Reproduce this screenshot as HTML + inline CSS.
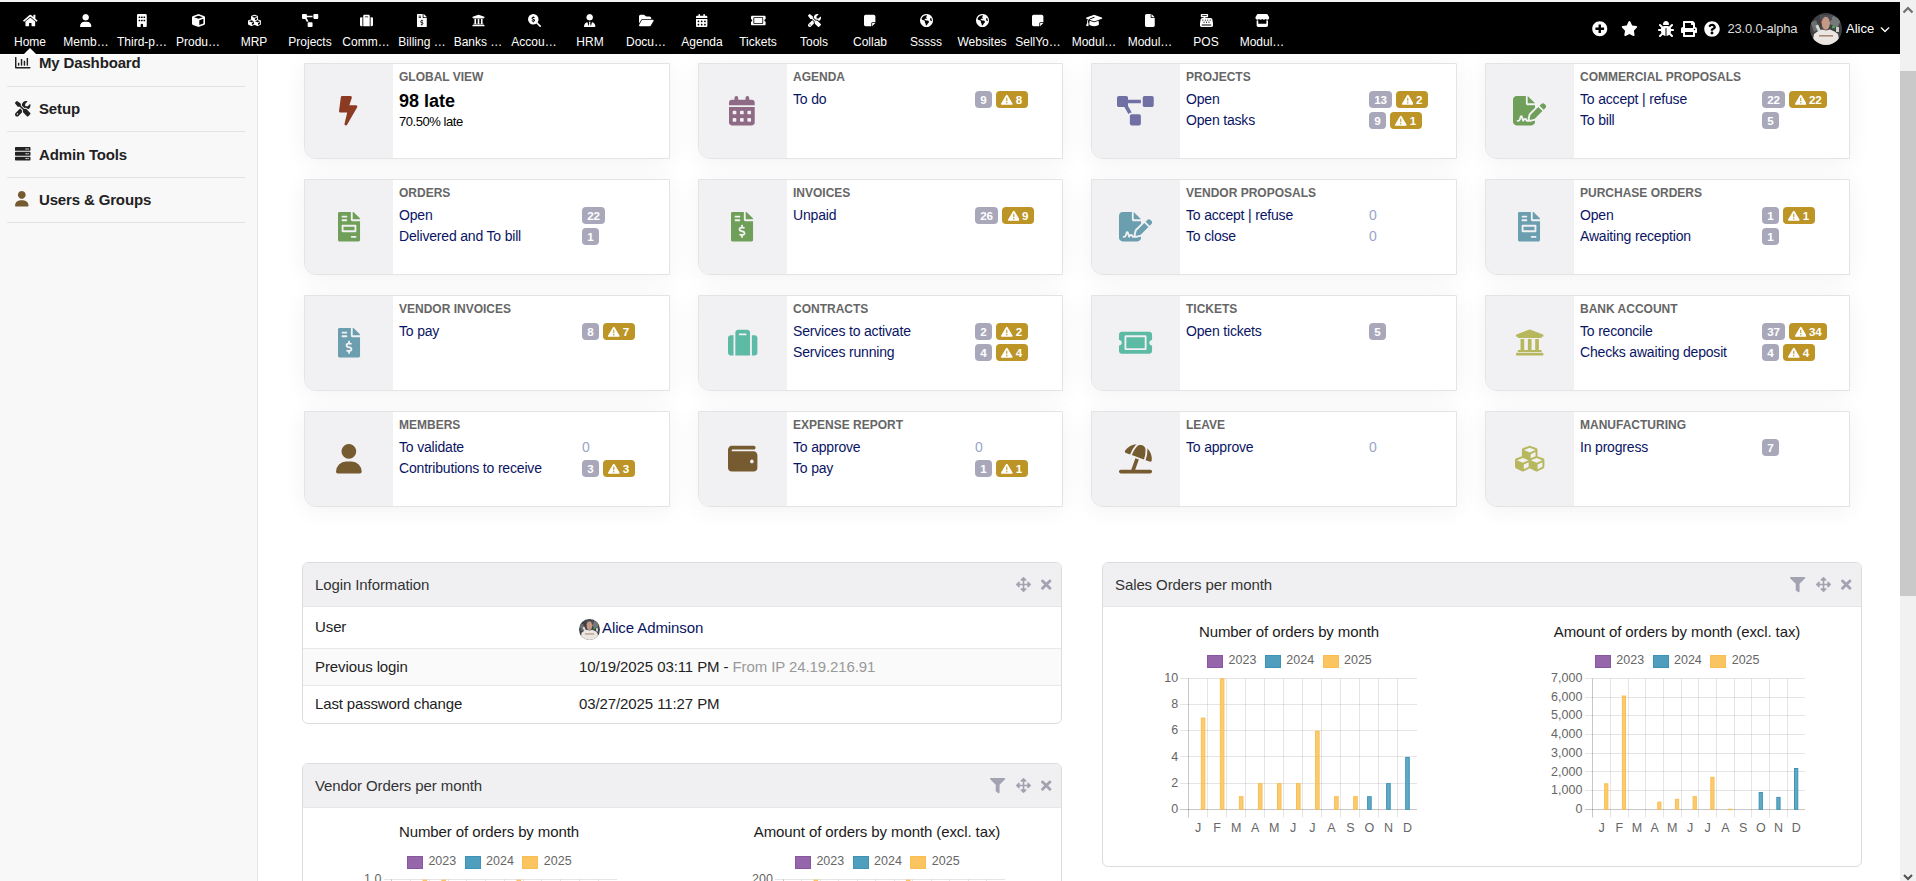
<!DOCTYPE html><html><head><meta charset="utf-8"><style>
*{box-sizing:border-box}
html,body{margin:0;padding:0}
body{width:1916px;height:881px;overflow:hidden;background:#fff;position:relative;font-family:"Liberation Sans",sans-serif}
.a{position:absolute;display:block;overflow:visible}
.t{position:absolute;white-space:nowrap}
.card{position:absolute;width:365.3px;height:96px;background:#fff;border:1px solid #e4e4e4;border-bottom-left-radius:12px;box-shadow:0 3px 24px rgba(0,0,0,0.055);overflow:hidden}
.card .ib{position:absolute;left:0;top:0;width:88px;height:94px;background:#f1f1f4}
.bdg{position:relative;height:17px;border-radius:4px;color:#fff;font-weight:700;font-size:11.6px;line-height:17px;padding:0 5px 0 5.2px;white-space:nowrap;letter-spacing:-0.1px}
.bg{background:#a9a8bb}
.bw{background:#bc9526;padding:0 5.6px 0 5.7px}
.lnk{color:#0a1464}
.panel{position:absolute;border:1px solid #dcdcdf;border-radius:6px;background:#fff;overflow:hidden}
.ph{position:absolute;left:0;top:0;right:0;height:44px;background:#f0f0f3;border-bottom:1px solid #e6e6e9}
</style></head><body>
<div class="a" style="left:0;top:0;width:1900px;height:2px;background:#f4f4f6"></div>
<div class="a" style="left:0;top:2px;width:1900px;height:52px;background:#000"></div>
<svg class="a" style="left:22.69px;top:13.50px;width:14.62px;height:13.00px;" viewBox="0 0 576 512"><path fill="#fff" fill-rule="evenodd" d="M280.37 148.26L96 300.11V464a16 16 0 0 0 16 16l112-.29a16 16 0 0 0 15.92-16V368a16 16 0 0 1 16-16h64a16 16 0 0 1 16 16v95.64a16 16 0 0 0 16 16.05L464 480a16 16 0 0 0 16-16V300L295.67 148.26a12.19 12.19 0 0 0-15.3 0zM571.6 251.47L488 182.56V44.05a12 12 0 0 0-12-12h-56a12 12 0 0 0-12 12v72.61L318.47 43a48 48 0 0 0-61 0L4.34 251.47a12 12 0 0 0-1.6 16.9l25.5 31A12 12 0 0 0 45.15 301l235.22-193.74a12.19 12.19 0 0 1 15.3 0L530.9 301a12 12 0 0 0 16.9-1.6l25.5-31a12 12 0 0 0-1.7-16.93z"/></svg>
<div class="t" style="left:30px;top:36.34px;font-size:12px;line-height:12px;color:#fff;font-weight:400;transform:translateX(-50%);">Home</div>
<svg class="a" style="left:80.31px;top:13.50px;width:11.38px;height:13.00px;" viewBox="0 0 448 512"><path fill="#fff" fill-rule="evenodd" d="M224 256Q259 256 288 239Q317 222 335 192Q352 162 352 128Q352 94 335 64Q317 34 288 17Q259 0 224 0Q189 0 160 17Q131 34 113 64Q96 94 96 128Q96 162 113 192Q131 222 160 239Q189 256 224 256ZM178 304Q103 306 52 356Q2 407 0 482Q0 495 9 503Q17 512 30 512H418Q431 512 439 503Q448 495 448 482Q446 407 396 356Q345 306 270 304H178Z"/></svg>
<div class="t" style="left:86px;top:36.34px;font-size:12px;line-height:12px;color:#fff;font-weight:400;transform:translateX(-50%);">Memb…</div>
<svg class="a" style="left:137.12px;top:13.50px;width:9.75px;height:13.00px;" viewBox="0 0 384 512"><path fill="#fff" fill-rule="evenodd" d="M48 0Q28 1 14 14Q1 28 0 48V464Q1 484 14 498Q28 511 48 512H144V432Q145 412 158 398Q172 385 192 384Q212 385 226 398Q239 412 240 432V512H336Q356 511 370 498Q383 484 384 464V48Q383 28 370 14Q356 1 336 0H48ZM64 240Q65 225 80 224H112Q127 225 128 240V272Q127 287 112 288H80Q65 287 64 272V240ZM176 224H208H176H208Q223 225 224 240V272Q223 287 208 288H176Q161 287 160 272V240Q161 225 176 224ZM256 240Q257 225 272 224H304Q319 225 320 240V272Q319 287 304 288H272Q257 287 256 272V240ZM80 96H112H80H112Q127 97 128 112V144Q127 159 112 160H80Q65 159 64 144V112Q65 97 80 96ZM160 112Q161 97 176 96H208Q223 97 224 112V144Q223 159 208 160H176Q161 159 160 144V112ZM272 96H304H272H304Q319 97 320 112V144Q319 159 304 160H272Q257 159 256 144V112Q257 97 272 96Z"/></svg>
<div class="t" style="left:142px;top:36.34px;font-size:12px;line-height:12px;color:#fff;font-weight:400;transform:translateX(-50%);">Third-p…</div>
<svg class="a" style="left:191.50px;top:13.50px;width:13.00px;height:13.00px;" viewBox="0 0 512 512"><path fill="#fff" fill-rule="evenodd" d="M235 6Q256 -2 278 6L470 74Q489 82 500 98Q512 114 512 135V377Q512 398 500 414Q489 430 470 438L278 506Q256 514 234 506L42 438Q23 431 12 414Q0 398 0 377V135Q0 114 12 98Q23 82 43 74L235 6ZM256 66 82 128 256 66 82 128 256 190 430 128 256 66ZM288 435 448 378 288 435 448 378V190L288 247V435Z"/></svg>
<div class="t" style="left:198px;top:36.34px;font-size:12px;line-height:12px;color:#fff;font-weight:400;transform:translateX(-50%);">Produ…</div>
<svg class="a" style="left:247.50px;top:13.50px;width:13.00px;height:13.00px;" viewBox="0 0 512 512"><path fill="#fff" fill-rule="evenodd" d="M488.6 250.2L392 214V105.5c0-15-9.3-28.4-23.4-33.7l-100-37.5c-8.1-3.1-17.1-3.1-25.3 0l-100 37.5c-14.1 5.3-23.4 18.7-23.4 33.7V214l-96.6 36.2C9.3 255.5 0 268.9 0 283.9V394c0 13.6 7.7 26.1 19.9 32.2l100 50c10.1 5.1 22.1 5.1 32.2 0l103.9-52 103.9 52c10.1 5.1 22.1 5.1 32.2 0l100-50c12.2-6.1 19.9-18.6 19.9-32.2V283.9c0-15-9.3-28.4-23.4-33.700zM358 214.8l-85 31.9v-68.2l85-37v73.3zM154 104.1l102-38.2 102 38.2v.6l-102 41.4-102-41.4v-.6zm84 291.1l-85 42.5v-79.1l85-38.8v75.4zm0-112l-102 41.4-102-41.4v-.6l102-38.2 102 38.2v.6zm240 112l-85 42.5v-79.1l85-38.8v75.4zm0-112l-102 41.4-102-41.4v-.6l102-38.2 102 38.2v.6z"/></svg>
<div class="t" style="left:254px;top:36.34px;font-size:12px;line-height:12px;color:#fff;font-weight:400;transform:translateX(-50%);">MRP</div>
<svg class="a" style="left:301.88px;top:13.50px;width:16.25px;height:13.00px;" viewBox="0 0 640 512"><path fill="#fff" fill-rule="evenodd" d="M384 320H256c-17.67 0-32 14.33-32 32v128c0 17.67 14.33 32 32 32h128c17.67 0 32-14.33 32-32V352c0-17.67-14.33-32-32-32zM192 32c0-17.67-14.33-32-32-32H32C14.33 0 0 14.33 0 32v128c0 17.67 14.33 32 32 32h95.72l73.16 128.04C211.98 300.98 232.4 288 256 288h.28L192 175.51V128h224V64H192V32zM608 0H480c-17.67 0-32 14.33-32 32v128c0 17.67 14.33 32 32 32h128c17.67 0 32-14.33 32-32V32c0-17.67-14.33-32-32-32z"/></svg>
<div class="t" style="left:310px;top:36.34px;font-size:12px;line-height:12px;color:#fff;font-weight:400;transform:translateX(-50%);">Projects</div>
<svg class="a" style="left:359.50px;top:13.50px;width:13.00px;height:13.00px;" viewBox="0 0 512 512"><path fill="#fff" fill-rule="evenodd" d="M128 480h256V80c0-26.5-21.5-48-48-48H176c-26.5 0-48 21.5-48 48v400zM192 96h128v32H192V96zm320 80v256c0 26.5-21.5 48-48 48h-48V128h48c26.5 0 48 21.5 48 48zM96 480H48c-26.5 0-48-21.5-48-48V176c0-26.5 21.5-48 48-48h48v352z"/></svg>
<div class="t" style="left:366px;top:36.34px;font-size:12px;line-height:12px;color:#fff;font-weight:400;transform:translateX(-50%);">Comm…</div>
<svg class="a" style="left:417.12px;top:13.50px;width:9.75px;height:13.00px;" viewBox="0 0 384 512"><path fill="#fff" fill-rule="evenodd" d="M377 105L279.1 7c-4.5-4.5-10.6-7-17-7H256v128h128v-6.1c0-6.3-2.5-12.4-7-16.9zm-153 31V0H24C10.7 0 0 10.7 0 24v464c0 13.3 10.7 24 24 24h336c13.3 0 24-10.7 24-24V160H248c-13.2 0-24-10.8-24-24zM64 72c0-4.42 3.58-8 8-8h80c4.42 0 8 3.58 8 8v16c0 4.42-3.58 8-8 8H72c-4.42 0-8-3.58-8-8V72zm0 80v-16c0-4.42 3.58-8 8-8h80c4.42 0 8 3.58 8 8v16c0 4.42-3.58 8-8 8H72c-4.42 0-8-3.58-8-8zm144 263.88V440c0 4.42-3.58 8-8 8h-16c-4.42 0-8-3.58-8-8v-24.29c-11.29-.58-22.27-4.52-31.37-11.35-3.9-2.93-4.1-8.77-.57-12.14l11.75-11.21c2.77-2.64 6.89-2.76 10.13-.73 3.87 2.42 8.26 3.72 12.82 3.72h28.11c6.5 0 11.8-5.92 11.8-13.190 0-5.95-3.61-11.19-8.77-12.73l-45-13.5c-18.59-5.58-31.58-23.42-31.58-43.39 0-24.52 19.05-44.44 42.67-45.07V232c0-4.42 3.58-8 8-8h16c4.42 0 8 3.58 8 8v24.29c11.29.58 22.27 4.51 31.37 11.35 3.9 2.93 4.1 8.77.57 12.14l-11.75 11.21c-2.77 2.64-6.89 2.76-10.130.73-3.87-2.43-8.26-3.72-12.82-3.72h-28.11c-6.5 0-11.8 5.92-11.8 13.19 0 5.95 3.61 11.19 8.77 12.73l45 13.5c18.59 5.58 31.58 23.42 31.58 43.39 0 24.530-19.05 44.44-42.67 45.07z"/></svg>
<div class="t" style="left:422px;top:36.34px;font-size:12px;line-height:12px;color:#fff;font-weight:400;transform:translateX(-50%);">Billing …</div>
<svg class="a" style="left:471.50px;top:13.50px;width:13.00px;height:13.00px;" viewBox="0 0 512 512"><path fill="#fff" fill-rule="evenodd" d="M496 128v16a8 8 0 0 1-8 8h-24v12c0 6.627-5.373 12-12 12H60c-6.627 0-12-5.373-12-12v-12H24a8 8 0 0 1-8-8v-16a16 16 0 0 1 9.876-14.774l224-88a16 16 0 0 1 12.248 0l224 88A16 16 0 0 1 496 128zm-24 304H40c-13.255 0-24 10.745-24 24v16a8 8 0 0 0 8 8h464a8 8 0 0 0 8-8v-16c0-13.255-10.745-24-24-24zM96 192v192H60c-6.627 0-12 5.373-12 12v20h416v-20c0-6.627-5.373-12-12-12h-36V192h-64v192h-64V192h-64v192h-64V192H96z"/></svg>
<div class="t" style="left:478px;top:36.34px;font-size:12px;line-height:12px;color:#fff;font-weight:400;transform:translateX(-50%);">Banks …</div>
<svg class="a" style="left:527.50px;top:13.50px;width:13.00px;height:13.00px;" viewBox="0 0 512 512"><path fill="#fff" fill-rule="evenodd" d="M416 208Q415 278 376 331L503 457Q512 467 512 480Q512 493 503 503Q493 512 480 512Q467 512 457 503L331 376Q278 415 208 416Q120 414 61 355Q2 296 0 208Q2 120 61 61Q120 2 208 0Q296 2 355 61Q414 120 416 208ZM228 104Q226 86 208 84Q190 86 188 104V118Q176 120 166 127Q142 139 140 170Q143 200 165 211Q183 221 200 225L202 226Q221 231 230 236Q237 241 236 244Q236 252 230 255Q222 260 209 260Q193 259 174 251Q170 250 166 249Q148 245 141 261Q137 279 154 287Q157 288 160 289Q172 294 188 297V312Q190 330 208 332Q226 330 228 312V298Q240 296 251 289Q274 276 276 244Q273 214 251 203Q233 192 214 188L213 187Q195 182 185 177Q179 173 180 170Q179 165 186 161Q195 156 208 156Q222 156 239 161Q257 164 263 147Q266 129 249 122Q239 120 228 118V104Z"/></svg>
<div class="t" style="left:534px;top:36.34px;font-size:12px;line-height:12px;color:#fff;font-weight:400;transform:translateX(-50%);">Accou…</div>
<svg class="a" style="left:584.31px;top:13.50px;width:11.38px;height:13.00px;" viewBox="0 0 448 512"><path fill="#fff" fill-rule="evenodd" d="M96 128Q96 163 113 192Q130 221 160 239Q190 256 224 256Q258 256 288 239Q318 221 335 192Q352 163 352 128Q352 93 335 64Q318 35 288 17Q258 0 224 0Q190 0 160 17Q130 35 113 64Q96 93 96 128ZM191 328 209 359 191 328 209 359 176 483 140 336Q135 323 122 325Q68 339 35 381Q1 424 0 481Q0 494 9 503Q18 512 31 512H163Q162 512 163 512Q163 512 163 512H168H286Q285 512 286 512Q286 512 286 512H417Q430 512 439 503Q448 494 448 481Q447 424 413 381Q380 339 326 325Q313 323 308 336L272 483L239 359L258 328Q262 320 258 312Q253 305 244 304H224H204Q195 305 190 312Q186 320 191 328Z"/></svg>
<div class="t" style="left:590px;top:36.34px;font-size:12px;line-height:12px;color:#fff;font-weight:400;transform:translateX(-50%);">HRM</div>
<svg class="a" style="left:638.69px;top:13.50px;width:14.62px;height:13.00px;" viewBox="0 0 576 512"><path fill="#fff" fill-rule="evenodd" d="M89 224 0 376 89 224 0 376V96Q1 69 19 51Q37 33 64 32H182Q208 32 227 51L253 77Q272 96 299 96H416Q443 97 461 115Q479 133 480 160V192H144Q108 193 89 224ZM116 240Q126 225 144 224H544Q562 225 572 240Q580 256 572 272L460 464Q450 479 432 480H32Q14 479 4 464Q-4 448 4 432L116 240Z"/></svg>
<div class="t" style="left:646px;top:36.34px;font-size:12px;line-height:12px;color:#fff;font-weight:400;transform:translateX(-50%);">Docu…</div>
<svg class="a" style="left:696.31px;top:13.50px;width:11.38px;height:13.00px;" viewBox="0 0 448 512"><path fill="#fff" fill-rule="evenodd" d="M128 0Q142 0 151 9Q160 18 160 32V64H288V32Q288 18 297 9Q306 0 320 0Q334 0 343 9Q352 18 352 32V64H400Q420 65 434 78Q447 92 448 112V160H0V112Q1 92 14 78Q28 65 48 64H96V32Q96 18 105 9Q114 0 128 0ZM0 192H448H0H448V464Q447 484 434 498Q420 511 400 512H48Q28 511 14 498Q1 484 0 464V192ZM64 272V304V272V304Q65 319 80 320H112Q127 319 128 304V272Q127 257 112 256H80Q65 257 64 272ZM192 272V304V272V304Q193 319 208 320H240Q255 319 256 304V272Q255 257 240 256H208Q193 257 192 272ZM336 256Q321 257 320 272V304Q321 319 336 320H368Q383 319 384 304V272Q383 257 368 256H336ZM64 400V432V400V432Q65 447 80 448H112Q127 447 128 432V400Q127 385 112 384H80Q65 385 64 400ZM208 384Q193 385 192 400V432Q193 447 208 448H240Q255 447 256 432V400Q255 385 240 384H208ZM320 400V432V400V432Q321 447 336 448H368Q383 447 384 432V400Q383 385 368 384H336Q321 385 320 400Z"/></svg>
<div class="t" style="left:702px;top:36.34px;font-size:12px;line-height:12px;color:#fff;font-weight:400;transform:translateX(-50%);">Agenda</div>
<svg class="a" style="left:750.69px;top:13.50px;width:14.62px;height:13.00px;" viewBox="0 0 576 512"><path fill="#fff" fill-rule="evenodd" d="M128 160h320v192H128V160zm400 96c0 26.51 21.49 48 48 48v96c0 26.51-21.49 48-48 48H48c-26.51 0-48-21.49-48-48v-96c26.51 0 48-21.49 48-48s-21.49-48-48-48v-96c0-26.51 21.49-48 48-48h480c26.51 0 48 21.49 48 48v96c-26.51 0-48 21.49-48 48zm-48-104c0-13.255-10.745-24-24-24H120c-13.255 0-24 10.745-24 24v208c0 13.255 10.745 24 24 24h336c13.255 0 24-10.745 24-24V152z"/></svg>
<div class="t" style="left:758px;top:36.34px;font-size:12px;line-height:12px;color:#fff;font-weight:400;transform:translateX(-50%);">Tickets</div>
<svg class="a" style="left:807.50px;top:13.50px;width:13.00px;height:13.00px;" viewBox="0 0 512 512"><path fill="#fff" fill-rule="evenodd" d="M79 5Q62 -6 47 7L7 47Q-6 62 5 79L85 183Q92 192 104 192H158L267 301Q256 323 260 348Q263 372 281 391L393 503Q403 512 416 512Q429 512 439 503L503 439Q512 429 512 416Q512 403 503 393L391 281Q372 263 348 260Q323 256 301 267L192 158V104Q192 92 183 85L79 5ZM20 396Q0 416 0 444Q1 473 20 492Q39 511 68 512Q96 512 116 492L234 374Q222 342 230 309L168 247L20 396ZM512 144Q512 128 509 114Q506 105 499 103Q491 102 485 108L421 171Q416 176 409 176H352Q337 175 336 160V103Q336 96 341 91L405 27Q411 21 409 13Q407 6 399 3Q384 0 368 0Q307 2 266 42Q226 83 224 144V145L309 230Q337 223 364 230Q392 238 413 259L429 275Q466 257 489 222Q511 188 512 144ZM56 432Q58 410 80 408Q102 410 104 432Q102 454 80 456Q58 454 56 432Z"/></svg>
<div class="t" style="left:814px;top:36.34px;font-size:12px;line-height:12px;color:#fff;font-weight:400;transform:translateX(-50%);">Tools</div>
<svg class="a" style="left:864.31px;top:13.50px;width:11.38px;height:13.00px;" viewBox="0 0 448 512"><path fill="#fff" fill-rule="evenodd" d="M64 32Q37 33 19 51Q1 69 0 96V416Q1 443 19 461Q37 479 64 480H288V368Q289 348 302 334Q316 321 336 320H448V96Q447 69 429 51Q411 33 384 32H64ZM448 352H403H448H336Q321 353 320 368V435V480L352 448L416 384L448 352Z"/></svg>
<div class="t" style="left:870px;top:36.34px;font-size:12px;line-height:12px;color:#fff;font-weight:400;transform:translateX(-50%);">Collab</div>
<svg class="a" style="left:919.50px;top:13.50px;width:13.00px;height:13.00px;" viewBox="0 0 512 512"><path fill="#fff" fill-rule="evenodd" d="M58 193 67 209 58 193 67 209Q80 232 105 239L163 256Q190 265 192 294V334Q193 352 208 360Q223 368 224 386V425Q224 437 233 444Q242 450 254 448Q279 439 287 414L289 403Q296 376 320 363L328 358Q351 344 352 316V308Q352 288 338 274L334 270Q320 256 300 256H257Q240 256 225 248L191 228Q184 224 182 217Q177 201 192 192L198 189Q208 184 219 188L242 195Q256 199 264 188Q271 176 263 165L249 149Q234 128 249 108L265 89Q279 72 269 52L266 48Q261 48 256 48Q185 49 132 89Q79 129 58 193ZM464 256Q463 200 438 155L412 165Q400 170 395 181Q390 192 394 205L410 255Q416 272 433 276L462 284Q464 270 464 256ZM0 256Q1 186 34 128Q68 70 128 34Q189 0 256 0Q323 0 384 34Q444 70 478 128Q511 186 512 256Q511 326 478 384Q444 442 384 478Q323 512 256 512Q189 512 128 478Q68 442 34 384Q1 326 0 256Z"/></svg>
<div class="t" style="left:926px;top:36.34px;font-size:12px;line-height:12px;color:#fff;font-weight:400;transform:translateX(-50%);">Sssss</div>
<svg class="a" style="left:975.50px;top:13.50px;width:13.00px;height:13.00px;" viewBox="0 0 512 512"><path fill="#fff" fill-rule="evenodd" d="M58 193 67 209 58 193 67 209Q80 232 105 239L163 256Q190 265 192 294V334Q193 352 208 360Q223 368 224 386V425Q224 437 233 444Q242 450 254 448Q279 439 287 414L289 403Q296 376 320 363L328 358Q351 344 352 316V308Q352 288 338 274L334 270Q320 256 300 256H257Q240 256 225 248L191 228Q184 224 182 217Q177 201 192 192L198 189Q208 184 219 188L242 195Q256 199 264 188Q271 176 263 165L249 149Q234 128 249 108L265 89Q279 72 269 52L266 48Q261 48 256 48Q185 49 132 89Q79 129 58 193ZM464 256Q463 200 438 155L412 165Q400 170 395 181Q390 192 394 205L410 255Q416 272 433 276L462 284Q464 270 464 256ZM0 256Q1 186 34 128Q68 70 128 34Q189 0 256 0Q323 0 384 34Q444 70 478 128Q511 186 512 256Q511 326 478 384Q444 442 384 478Q323 512 256 512Q189 512 128 478Q68 442 34 384Q1 326 0 256Z"/></svg>
<div class="t" style="left:982px;top:36.34px;font-size:12px;line-height:12px;color:#fff;font-weight:400;transform:translateX(-50%);">Websites</div>
<svg class="a" style="left:1032.31px;top:13.50px;width:11.38px;height:13.00px;" viewBox="0 0 448 512"><path fill="#fff" fill-rule="evenodd" d="M64 32Q37 33 19 51Q1 69 0 96V416Q1 443 19 461Q37 479 64 480H288V368Q289 348 302 334Q316 321 336 320H448V96Q447 69 429 51Q411 33 384 32H64ZM448 352H403H448H336Q321 353 320 368V435V480L352 448L416 384L448 352Z"/></svg>
<div class="t" style="left:1038px;top:36.34px;font-size:12px;line-height:12px;color:#fff;font-weight:400;transform:translateX(-50%);">SellYo…</div>
<svg class="a" style="left:1085.88px;top:13.50px;width:16.25px;height:13.00px;" viewBox="0 0 640 512"><path fill="#fff" fill-rule="evenodd" d="M320 32Q308 32 296 36L16 137Q1 144 0 160Q1 176 16 183L74 204Q49 243 48 292V320Q45 364 26 401Q16 420 3 438Q-2 445 1 453Q4 461 12 464L76 480Q83 481 89 478Q94 474 96 467Q106 401 94 359Q89 337 80 317V292Q81 246 108 210Q127 187 157 175L314 113Q328 109 335 122Q339 136 326 143L169 204Q150 212 137 226L296 284Q308 288 320 288Q332 288 344 284L624 183Q639 176 640 160Q639 144 624 137L344 36Q332 32 320 32ZM128 408Q130 436 184 457Q238 479 320 480Q402 479 456 457Q510 436 512 408L497 263L355 314Q338 320 320 320Q302 320 286 314L143 263L128 408Z"/></svg>
<div class="t" style="left:1094px;top:36.34px;font-size:12px;line-height:12px;color:#fff;font-weight:400;transform:translateX(-50%);">Modul…</div>
<svg class="a" style="left:1145.12px;top:13.50px;width:9.75px;height:13.00px;" viewBox="0 0 384 512"><path fill="#fff" fill-rule="evenodd" d="M0 64Q1 37 19 19Q37 1 64 0H224V128Q224 142 233 151Q242 160 256 160H384V448Q383 475 365 493Q347 511 320 512H64Q37 511 19 493Q1 475 0 448V64ZM384 128H256H384H256V0L384 128Z"/></svg>
<div class="t" style="left:1150px;top:36.34px;font-size:12px;line-height:12px;color:#fff;font-weight:400;transform:translateX(-50%);">Modul…</div>
<svg class="a" style="left:1199.50px;top:13.50px;width:13.00px;height:13.00px;" viewBox="0 0 512 512"><path fill="#fff" fill-rule="evenodd" d="M64 0Q50 0 41 9Q32 18 32 32V96Q32 110 41 119Q50 128 64 128H144V160H87Q63 160 45 175Q28 190 24 214L1 364Q0 371 0 378V448Q1 475 19 493Q37 511 64 512H448Q475 511 493 493Q511 475 512 448V378Q512 371 511 364L488 214Q484 190 467 175Q449 160 425 160H208V128H288Q302 128 311 119Q320 110 320 96V32Q320 18 311 9Q302 0 288 0H64ZM96 48H256H96H256Q271 49 272 64Q271 79 256 80H96Q81 79 80 64Q81 49 96 48ZM64 432Q65 417 80 416H432Q447 417 448 432Q447 447 432 448H80Q65 447 64 432ZM112 264Q90 262 88 240Q90 218 112 216Q134 218 136 240Q134 262 112 264ZM232 240Q230 262 208 264Q186 262 184 240Q186 218 208 216Q230 218 232 240ZM160 344Q138 342 136 320Q138 298 160 296Q182 298 184 320Q182 342 160 344ZM328 240Q326 262 304 264Q282 262 280 240Q282 218 304 216Q326 218 328 240ZM256 344Q234 342 232 320Q234 298 256 296Q278 298 280 320Q278 342 256 344ZM424 240Q422 262 400 264Q378 262 376 240Q378 218 400 216Q422 218 424 240ZM352 344Q330 342 328 320Q330 298 352 296Q374 298 376 320Q374 342 352 344Z"/></svg>
<div class="t" style="left:1206px;top:36.34px;font-size:12px;line-height:12px;color:#fff;font-weight:400;transform:translateX(-50%);">POS</div>
<svg class="a" style="left:1254.69px;top:13.50px;width:14.62px;height:13.00px;" viewBox="0 0 576 512"><path fill="#fff" fill-rule="evenodd" d="M548 104 490 13 548 104 490 13Q482 0 466 0H110Q94 0 86 13L28 104Q7 141 22 178Q38 215 80 223Q86 224 92 224Q133 223 158 195Q182 223 223 224Q263 223 288 195Q313 223 353 224Q393 223 418 195Q443 223 484 224Q490 224 496 223Q538 215 554 178Q569 141 548 104ZM500 255Q492 256 483 256Q465 256 448 251V384H128V251Q111 256 92 256Q84 256 76 255Q70 254 64 253V384V448Q65 475 83 493Q101 511 128 512H448Q475 511 493 493Q511 475 512 448V384V253Q506 254 500 255Z"/></svg>
<div class="t" style="left:1262px;top:36.34px;font-size:12px;line-height:12px;color:#fff;font-weight:400;transform:translateX(-50%);">Modul…</div>
<div class="a" style="left:24px;top:48px;width:0;height:0;border-left:6px solid transparent;border-right:6px solid transparent;border-bottom:6px solid #fff"></div>
<svg class="a" style="left:1591.55px;top:20.75px;width:15.50px;height:15.50px;" viewBox="0 0 512 512"><path fill="#fff" fill-rule="evenodd" d="M256 8C119 8 8 119 8 256s111 248 248 248 248-111 248-248S393 8 256 8zm144 276c0 6.6-5.4 12-12 12h-92v92c0 6.6-5.4 12-12 12h-56c-6.6 0-12-5.4-12-12v-92h-92c-6.6 0-12-5.4-12-12v-56c0-6.6 5.4-12 12-12h92v-92c0-6.6 5.4-12 12-12h56c6.6 0 12 5.4 12 12v92h92c6.6 0 12 5.4 12 12v56z"/></svg>
<svg class="a" style="left:1620.56px;top:21.00px;width:16.88px;height:15.00px;" viewBox="0 0 576 512"><path fill="#fff" fill-rule="evenodd" d="M317 18Q308 1 288 0Q269 1 259 18L195 150L51 172Q32 175 26 193Q20 212 34 226L138 329L113 475Q111 494 126 506Q142 517 160 508L288 440L417 508Q434 517 450 506Q466 494 463 475L439 329L543 226Q556 212 551 193Q544 175 525 172L381 150L317 18Z"/></svg>
<svg class="a" style="left:1658.00px;top:21.00px;width:16.00px;height:16.00px;" viewBox="0 0 512 512"><path fill="#fff" fill-rule="evenodd" d="M256 0Q297 1 324 28Q351 55 352 96V100Q352 112 344 120Q336 128 324 128H188Q176 128 168 120Q160 112 160 100V96Q161 55 188 28Q215 1 256 0ZM41 105Q51 96 64 96Q77 96 87 105L151 169Q152 170 153 171Q153 171 153 172Q174 160 200 160H312Q338 160 360 172Q360 170 361 169L425 105Q435 96 448 96Q461 96 471 105Q480 115 480 128Q480 141 471 151L407 215Q406 216 405 217Q414 235 416 256H480Q494 256 503 265Q512 274 512 288Q512 302 503 311Q494 320 480 320H416Q416 357 401 389Q404 391 407 393L471 457Q480 467 480 480Q480 493 471 503Q461 512 448 512Q435 512 425 503L362 440Q325 473 272 479V240Q271 225 256 224Q241 225 240 240V479Q187 473 150 440L87 503Q77 512 64 512Q51 512 41 503Q32 493 32 480Q32 467 41 457L105 393Q108 391 111 389Q96 357 96 320H32Q18 320 9 311Q0 302 0 288Q0 274 9 265Q18 256 32 256H96Q98 235 107 217Q106 216 105 215L41 151Q32 141 32 128Q32 115 41 105Z"/></svg>
<svg class="a" style="left:1681.00px;top:21.00px;width:16.00px;height:16.00px;" viewBox="0 0 512 512"><path fill="#fff" fill-rule="evenodd" d="M448 192V77.25c0-8.49-3.37-16.62-9.37-22.63L393.37 9.37c-6-6-14.14-9.37-22.63-9.37H96C78.33 0 64 14.33 64 32v160c-35.35 0-64 28.65-64 64v112c0 8.84 7.16 16 16 16h48v96c0 17.67 14.33 32 32 32h320c17.67 0 32-14.33 32-32v-96h48c8.84 0 16-7.16 16-16V256c0-35.35-28.65-64-64-64zm-64 256H128v-96h256v96zm0-224H128V64h192v48c0 8.84 7.16 16 16 16h48v96zm48 72c-13.25 0-24-10.75-24-24 0-13.26 10.75-24 24-24s24 10.74 24 24c0 13.25-10.75 24-24 24z"/></svg>
<svg class="a" style="left:1704.00px;top:21.00px;width:16.00px;height:16.00px;" viewBox="0 0 512 512"><path fill="#fff" fill-rule="evenodd" d="M504 256c0 136.997-111.043 248-248 248S8 392.997 8 256C8 119.083 119.043 8 256 8s248 111.083 248 248zM262.655 90c-54.497 0-89.255 22.957-116.549 63.758-3.536 5.286-2.353 12.415 2.715 16.258l34.699 26.31c5.205 3.947 12.621 3.008 16.665-2.122 17.864-22.658 30.113-35.797 57.303-35.797 20.429 0 45.698 13.148 45.698 32.958 0 14.976-12.363 22.667-32.534 33.976C247.128 238.528 216 254.941 216 296v4c0 6.627 5.373 12 12 12h56c6.627 0 12-5.373 12-12v-1.333c0-28.462 83.186-29.647 83.186-106.667 0-58.002-60.165-102-116.531-102zM256 338c-25.365 0-46 20.635-46 46 0 25.364 20.635 46 46 46s46-20.636 46-46c0-25.365-20.635-46-46-46z"/></svg>
<div class="t" style="left:1727.5px;top:21.70px;font-size:13px;line-height:13px;color:#ddd;font-weight:400;letter-spacing:-0.2px;">23.0.0-alpha</div>
<svg class="a" style="left:1810px;top:12.7px;width:32px;height:32px" viewBox="0 0 32 32"><defs><clipPath id="av1"><circle cx="16" cy="16" r="16"/></clipPath></defs><g clip-path="url(#av1)"><rect width="32" height="32" fill="#3f4042"/><rect x="2" y="8" width="6" height="10" fill="#6d6e70" transform="rotate(-20 5 13)"/><rect x="21" y="4" width="9" height="9" fill="#77787a" transform="rotate(25 25 8)"/><rect x="7" y="12" width="3" height="9" fill="#d8d8d8" transform="rotate(-25 8 16)"/><rect x="26" y="14" width="3" height="5" fill="#cfcfcf"/><circle cx="23.5" cy="14" r="1.6" fill="#3fae5a"/><circle cx="11.5" cy="8.5" r="1" fill="#c04040"/><rect x="10" y="2" width="12" height="5" fill="#4c5058"/><ellipse cx="15.8" cy="10.3" rx="4.1" ry="6.5" fill="#c49a86"/><path d="M2 32 L4 21 Q7 18 12 16.5 L16 17.5 L20 16.5 Q25 18 28 21 L30 32 Z" fill="#ebe6e2"/><rect x="9" y="22" width="14" height="1.6" fill="#a68a76"/></g></svg>
<div class="t" style="left:1846px;top:21.70px;font-size:13px;line-height:13px;color:#fff;font-weight:400;">Alice</div>
<svg class="a" style="left:1879.50px;top:24.00px;width:10.00px;height:10.00px;" viewBox="0 0 512 512"><path fill="#fff" fill-rule="evenodd" d="M233 407Q243 416 256 416Q269 416 279 407L471 215Q480 205 480 192Q480 179 471 169Q461 160 448 160Q435 160 425 169L256 339L87 169Q77 160 64 160Q51 160 41 169Q32 179 32 192Q32 205 41 215L233 407Z"/></svg>
<div class="a" style="left:1900px;top:0;width:16px;height:881px;background:#f1f1f1"></div>
<div class="a" style="left:1900px;top:71px;width:16px;height:525px;background:#c9c9c9"></div>
<svg class="a" style="left:1900px;top:1.5px;width:16px;height:16px" viewBox="0 0 16 16"><path d="M3.5 10.5 L8 6 L12.5 10.5" fill="none" stroke="#6e6e6e" stroke-width="2.2"/></svg>
<svg class="a" style="left:1900px;top:869px;width:16px;height:16px" viewBox="0 0 16 16"><path d="M4 6 L8 10 L12 6" fill="none" stroke="#505050" stroke-width="2"/></svg>
<div class="a" style="left:0;top:55px;width:258px;height:826px;background:#f8f8f8;border-right:1px solid #e6e6e6"></div>
<svg class="a" style="left:14.70px;top:55.15px;width:15.50px;height:15.50px;" viewBox="0 0 512 512"><path fill="#222" fill-rule="evenodd" d="M396.8 352h22.4c6.4 0 12.8-6.4 12.8-12.8V108.8c0-6.4-6.4-12.8-12.8-12.8h-22.4c-6.4 0-12.8 6.4-12.8 12.8v230.4c0 6.4 6.4 12.8 12.8 12.8zm-192 0h22.4c6.4 0 12.8-6.4 12.8-12.8V140.8c0-6.4-6.4-12.8-12.8-12.8h-22.4c-6.4 0-12.8 6.4-12.8 12.8v198.4c0 6.4 6.4 12.8 12.8 12.8zm96 0h22.4c6.4 0 12.8-6.4 12.8-12.8V204.8c0-6.4-6.4-12.8-12.8-12.8h-22.4c-6.4 0-12.8 6.4-12.8 12.8v134.4c0 6.4 6.4 12.8 12.8 12.8zM496 400H48V80c0-8.840-7.16-16-16-16H16C7.16 64 0 71.16 0 80v336c0 17.67 14.33 32 32 32h464c8.84 0 16-7.16 16-16v-16c0-8.84-7.16-16-16-16zm-387.2-48h22.4c6.4 0 12.8-6.4 12.8-12.8v-70.4c0-6.4-6.4-12.8-12.8-12.8h-22.4c-6.4 0-12.8 6.4-12.8 12.8v70.4c0 6.4 6.4 12.8 12.8 12.8z"/></svg>
<div class="t" style="left:39px;top:54.90px;font-size:15px;line-height:15px;color:#222;font-weight:700;letter-spacing:-0.15px;">My Dashboard</div>
<svg class="a" style="left:14.70px;top:100.55px;width:15.50px;height:15.50px;" viewBox="0 0 512 512"><path fill="#222" fill-rule="evenodd" d="M79 5Q62 -6 47 7L7 47Q-6 62 5 79L85 183Q92 192 104 192H158L267 301Q256 323 260 348Q263 372 281 391L393 503Q403 512 416 512Q429 512 439 503L503 439Q512 429 512 416Q512 403 503 393L391 281Q372 263 348 260Q323 256 301 267L192 158V104Q192 92 183 85L79 5ZM20 396Q0 416 0 444Q1 473 20 492Q39 511 68 512Q96 512 116 492L234 374Q222 342 230 309L168 247L20 396ZM512 144Q512 128 509 114Q506 105 499 103Q491 102 485 108L421 171Q416 176 409 176H352Q337 175 336 160V103Q336 96 341 91L405 27Q411 21 409 13Q407 6 399 3Q384 0 368 0Q307 2 266 42Q226 83 224 144V145L309 230Q337 223 364 230Q392 238 413 259L429 275Q466 257 489 222Q511 188 512 144ZM56 432Q58 410 80 408Q102 410 104 432Q102 454 80 456Q58 454 56 432Z"/></svg>
<div class="t" style="left:39px;top:101.10px;font-size:15px;line-height:15px;color:#222;font-weight:700;letter-spacing:-0.15px;">Setup</div>
<svg class="a" style="left:14.70px;top:146.35px;width:15.50px;height:15.50px;" viewBox="0 0 512 512"><path fill="#222" fill-rule="evenodd" d="M480 160H32c-17.673 0-32-14.327-32-32V64c0-17.673 14.327-32 32-32h448c17.673 0 32 14.327 32 32v64c0 17.673-14.327 32-32 32zm-48-88c-13.255 0-24 10.745-24 24s10.745 24 24 24 24-10.745 24-24-10.745-24-24-24zm-64 0c-13.255 0-24 10.745-24 24s10.745 24 24 24 24-10.745 24-24-10.745-24-24-24zm112 248H32c-17.673 0-32-14.327-32-32v-64c0-17.673 14.327-32 32-32h448c17.673 0 32 14.327 32 32v64c0 17.673-14.327 32-32 32zm-48-88c-13.255 0-24 10.745-24 24s10.745 24 24 24 24-10.745 24-24-10.745-24-24-24zm-64 0c-13.255 0-24 10.745-24 24s10.745 24 24 24 24-10.745 24-24-10.745-24-24-24zm112 248H32c-17.673 0-32-14.327-32-32v-64c0-17.673 14.327-32 32-32h448c17.673 0 32 14.327 32 32v64c0 17.673-14.327 32-32 32zm-48-88c-13.255 0-24 10.745-24 24s10.745 24 24 24 24-10.745 24-24-10.745-24-24-24zm-64 0c-13.255 0-24 10.745-24 24s10.745 24 24 24 24-10.745 24-24-10.745-24-24-24z"/></svg>
<div class="t" style="left:39px;top:146.90px;font-size:15px;line-height:15px;color:#222;font-weight:700;letter-spacing:-0.15px;">Admin Tools</div>
<svg class="a" style="left:14.70px;top:191.05px;width:13.56px;height:15.50px;" viewBox="0 0 448 512"><path fill="#765b30" fill-rule="evenodd" d="M224 256Q259 256 288 239Q317 222 335 192Q352 162 352 128Q352 94 335 64Q317 34 288 17Q259 0 224 0Q189 0 160 17Q131 34 113 64Q96 94 96 128Q96 162 113 192Q131 222 160 239Q189 256 224 256ZM178 304Q103 306 52 356Q2 407 0 482Q0 495 9 503Q17 512 30 512H418Q431 512 439 503Q448 495 448 482Q446 407 396 356Q345 306 270 304H178Z"/></svg>
<div class="t" style="left:39px;top:191.60px;font-size:15px;line-height:15px;color:#222;font-weight:700;letter-spacing:-0.15px;">Users &amp; Groups</div>
<div class="a" style="left:7px;top:86px;width:238px;height:1px;background:#e4e4e4"></div>
<div class="a" style="left:7px;top:131px;width:238px;height:1px;background:#e4e4e4"></div>
<div class="a" style="left:7px;top:177px;width:238px;height:1px;background:#e4e4e4"></div>
<div class="a" style="left:7px;top:222px;width:238px;height:1px;background:#e4e4e4"></div>
<div class="card" style="left:304px;top:63px;width:366px"><div class="ib"></div></div>
<svg class="a" style="left:339.41px;top:96.30px;width:18.38px;height:29.40px;" viewBox="0 0 320 512"><path fill="#8c3a22" fill-rule="evenodd" d="M296 160H180.6l42.6-129.8C227.2 15 215.7 0 200 0H56C44 0 33.8 8.9 32.2 20.8l-32 240C-1.7 275.2 9.5 288 24 288h118.7L96.6 482.5c-3.6 15.2 8 29.5 23.3 29.5 8.4 0 16.4-4.4 20.8-12l176-304c9.3-15.9-2.2-36-20.7-36z"/></svg>
<div class="t" style="left:399px;top:71.34px;font-size:12px;line-height:12px;color:#666;font-weight:700;">GLOBAL VIEW</div>
<div class="t" style="left:399px;top:92.26px;font-size:18px;line-height:18px;color:#000;font-weight:700;">98 late</div>
<div class="t" style="left:399px;top:114.60px;font-size:13px;line-height:13px;color:#000;font-weight:400;letter-spacing:-0.45px;">70.50% late</div>
<div class="card" style="left:698px;top:63px;width:365px"><div class="ib"></div></div>
<svg class="a" style="left:729.34px;top:96.30px;width:25.72px;height:29.40px;" viewBox="0 0 448 512"><path fill="#8e6a84" fill-rule="evenodd" d="M128 0Q142 0 151 9Q160 18 160 32V64H288V32Q288 18 297 9Q306 0 320 0Q334 0 343 9Q352 18 352 32V64H400Q420 65 434 78Q447 92 448 112V160H0V112Q1 92 14 78Q28 65 48 64H96V32Q96 18 105 9Q114 0 128 0ZM0 192H448H0H448V464Q447 484 434 498Q420 511 400 512H48Q28 511 14 498Q1 484 0 464V192ZM64 272V304V272V304Q65 319 80 320H112Q127 319 128 304V272Q127 257 112 256H80Q65 257 64 272ZM192 272V304V272V304Q193 319 208 320H240Q255 319 256 304V272Q255 257 240 256H208Q193 257 192 272ZM336 256Q321 257 320 272V304Q321 319 336 320H368Q383 319 384 304V272Q383 257 368 256H336ZM64 400V432V400V432Q65 447 80 448H112Q127 447 128 432V400Q127 385 112 384H80Q65 385 64 400ZM208 384Q193 385 192 400V432Q193 447 208 448H240Q255 447 256 432V400Q255 385 240 384H208ZM320 400V432V400V432Q321 447 336 448H368Q383 447 384 432V400Q383 385 368 384H336Q321 385 320 400Z"/></svg>
<div class="t" style="left:793px;top:71.34px;font-size:12px;line-height:12px;color:#666;font-weight:700;">AGENDA</div>
<div class="t" style="left:793px;top:91.95px;font-size:14px;line-height:14px;color:#0a1464;font-weight:400;letter-spacing:-0.18px;">To do</div>
<div class="a" style="left:975px;top:91.2px;display:flex;gap:4px"><div class="bdg bg">9</div><div class="bdg bw"><svg style="display:inline-block;vertical-align:-1px;width:11.6px;height:11.6px;margin-right:2.8px" viewBox="0 0 512 512"><path fill="#fff" fill-rule="evenodd" d="M256 32Q279 33 291 52L507 420Q517 440 507 460Q495 479 472 480H40Q17 479 5 460Q-5 440 5 420L222 52Q234 33 256 32ZM256 160Q234 162 232 184V296Q234 318 256 320Q278 318 280 296V184Q278 162 256 160ZM288 384Q288 370 279 361Q270 352 256 352Q242 352 233 361Q224 370 224 384Q224 398 233 407Q242 416 256 416Q270 416 279 407Q288 398 288 384Z"/></svg>8</div></div>
<div class="card" style="left:1091px;top:63px;width:366px"><div class="ib"></div></div>
<svg class="a" style="left:1117.23px;top:96.30px;width:36.75px;height:29.40px;" viewBox="0 0 640 512"><path fill="#7170a5" fill-rule="evenodd" d="M384 320H256c-17.67 0-32 14.33-32 32v128c0 17.67 14.33 32 32 32h128c17.67 0 32-14.33 32-32V352c0-17.67-14.33-32-32-32zM192 32c0-17.67-14.33-32-32-32H32C14.33 0 0 14.33 0 32v128c0 17.67 14.33 32 32 32h95.72l73.16 128.04C211.98 300.98 232.4 288 256 288h.28L192 175.51V128h224V64H192V32zM608 0H480c-17.67 0-32 14.33-32 32v128c0 17.67 14.33 32 32 32h128c17.67 0 32-14.33 32-32V32c0-17.67-14.33-32-32-32z"/></svg>
<div class="t" style="left:1186px;top:71.34px;font-size:12px;line-height:12px;color:#666;font-weight:700;">PROJECTS</div>
<div class="t" style="left:1186px;top:91.95px;font-size:14px;line-height:14px;color:#0a1464;font-weight:400;letter-spacing:-0.18px;">Open</div>
<div class="a" style="left:1369px;top:91.2px;display:flex;gap:4px"><div class="bdg bg">13</div><div class="bdg bw"><svg style="display:inline-block;vertical-align:-1px;width:11.6px;height:11.6px;margin-right:2.8px" viewBox="0 0 512 512"><path fill="#fff" fill-rule="evenodd" d="M256 32Q279 33 291 52L507 420Q517 440 507 460Q495 479 472 480H40Q17 479 5 460Q-5 440 5 420L222 52Q234 33 256 32ZM256 160Q234 162 232 184V296Q234 318 256 320Q278 318 280 296V184Q278 162 256 160ZM288 384Q288 370 279 361Q270 352 256 352Q242 352 233 361Q224 370 224 384Q224 398 233 407Q242 416 256 416Q270 416 279 407Q288 398 288 384Z"/></svg>2</div></div>
<div class="t" style="left:1186px;top:112.95px;font-size:14px;line-height:14px;color:#0a1464;font-weight:400;letter-spacing:-0.18px;">Open tasks</div>
<div class="a" style="left:1369px;top:112.2px;display:flex;gap:4px"><div class="bdg bg">9</div><div class="bdg bw"><svg style="display:inline-block;vertical-align:-1px;width:11.6px;height:11.6px;margin-right:2.8px" viewBox="0 0 512 512"><path fill="#fff" fill-rule="evenodd" d="M256 32Q279 33 291 52L507 420Q517 440 507 460Q495 479 472 480H40Q17 479 5 460Q-5 440 5 420L222 52Q234 33 256 32ZM256 160Q234 162 232 184V296Q234 318 256 320Q278 318 280 296V184Q278 162 256 160ZM288 384Q288 370 279 361Q270 352 256 352Q242 352 233 361Q224 370 224 384Q224 398 233 407Q242 416 256 416Q270 416 279 407Q288 398 288 384Z"/></svg>1</div></div>
<div class="card" style="left:1485px;top:63px;width:365px"><div class="ib"></div></div>
<svg class="a" style="left:1512.66px;top:96.30px;width:33.07px;height:29.40px;" viewBox="0 0 576 512"><path fill="#6f9f58" fill-rule="evenodd" d="M64 0Q37 1 19 19Q1 37 0 64V448Q1 475 19 493Q37 511 64 512H320Q347 511 365 493Q383 475 384 448V429Q380 430 376 431L316 446Q311 447 307 448Q305 448 304 448H240Q230 448 226 439L217 422Q214 416 208 416Q202 416 199 422L190 439Q185 448 175 448Q164 447 161 437L144 381L134 414Q123 446 88 448H80Q65 447 64 432Q65 417 80 416H88Q100 415 104 405L118 355Q125 337 144 336Q163 337 170 355L181 394Q193 384 208 384Q233 385 246 407L250 416H259Q254 403 257 388L272 328Q277 311 289 298L384 204V160H256Q242 160 233 151Q224 142 224 128V0H64ZM256 0V128V0V128H384L256 0ZM550 140Q537 128 522 128Q506 128 493 140L464 169L535 240L564 211Q576 198 576 182Q576 166 564 154L550 140ZM312 321Q306 327 304 336L289 396Q287 405 293 411Q299 417 308 415L368 400Q377 398 383 392L512 263L441 192L312 321Z"/></svg>
<div class="t" style="left:1580px;top:71.34px;font-size:12px;line-height:12px;color:#666;font-weight:700;">COMMERCIAL PROPOSALS</div>
<div class="t" style="left:1580px;top:91.95px;font-size:14px;line-height:14px;color:#0a1464;font-weight:400;letter-spacing:-0.18px;">To accept | refuse</div>
<div class="a" style="left:1762px;top:91.2px;display:flex;gap:4px"><div class="bdg bg">22</div><div class="bdg bw"><svg style="display:inline-block;vertical-align:-1px;width:11.6px;height:11.6px;margin-right:2.8px" viewBox="0 0 512 512"><path fill="#fff" fill-rule="evenodd" d="M256 32Q279 33 291 52L507 420Q517 440 507 460Q495 479 472 480H40Q17 479 5 460Q-5 440 5 420L222 52Q234 33 256 32ZM256 160Q234 162 232 184V296Q234 318 256 320Q278 318 280 296V184Q278 162 256 160ZM288 384Q288 370 279 361Q270 352 256 352Q242 352 233 361Q224 370 224 384Q224 398 233 407Q242 416 256 416Q270 416 279 407Q288 398 288 384Z"/></svg>22</div></div>
<div class="t" style="left:1580px;top:112.95px;font-size:14px;line-height:14px;color:#0a1464;font-weight:400;letter-spacing:-0.18px;">To bill</div>
<div class="a" style="left:1762px;top:112.2px;display:flex;gap:4px"><div class="bdg bg">5</div></div>
<div class="card" style="left:304px;top:179px;width:366px"><div class="ib"></div></div>
<svg class="a" style="left:337.57px;top:212.30px;width:22.05px;height:29.40px;" viewBox="0 0 384 512"><path fill="#6f9f58" fill-rule="evenodd" d="M288 256H96v64h192v-64zm89-151L279.1 7c-4.5-4.5-10.6-7-17-7H256v128h128v-6.1c0-6.3-2.5-12.4-7-16.9zm-153 31V0H24C10.7 0 0 10.7 0 24v464c0 13.3 10.7 24 24 24h336c13.3 0 24-10.7 24-24V160H248c-13.2 0-24-10.8-24-24zM64 72c0-4.42 3.58-8 8-8h80c4.42 0 8 3.58 8 8v16c0 4.42-3.58 8-8 8H72c-4.42 0-8-3.58-8-8V72zm0 64c0-4.42 3.58-8 8-8h80c4.42 0 8 3.58 8 8v16c0 4.42-3.58 8-8 8H72c-4.42 0-8-3.58-8-8v-16zm256 304c0 4.42-3.58 8-8 8h-80c-4.42 0-8-3.58-8-8v-16c0-4.42 3.58-8 8-8h80c4.42 0 8 3.58 8 8v16zm0-200v96c0 8.84-7.16 16-16 16H80c-8.84 0-16-7.16-16-16v-96c0-8.84 7.16-16 16-16h224c8.84 0 16 7.16 16 16z"/></svg>
<div class="t" style="left:399px;top:187.34px;font-size:12px;line-height:12px;color:#666;font-weight:700;">ORDERS</div>
<div class="t" style="left:399px;top:207.95px;font-size:14px;line-height:14px;color:#0a1464;font-weight:400;letter-spacing:-0.18px;">Open</div>
<div class="a" style="left:582px;top:207.2px;display:flex;gap:4px"><div class="bdg bg">22</div></div>
<div class="t" style="left:399px;top:228.95px;font-size:14px;line-height:14px;color:#0a1464;font-weight:400;letter-spacing:-0.18px;">Delivered and To bill</div>
<div class="a" style="left:582px;top:228.2px;display:flex;gap:4px"><div class="bdg bg">1</div></div>
<div class="card" style="left:698px;top:179px;width:365px"><div class="ib"></div></div>
<svg class="a" style="left:731.18px;top:212.30px;width:22.05px;height:29.40px;" viewBox="0 0 384 512"><path fill="#6f9f58" fill-rule="evenodd" d="M377 105L279.1 7c-4.5-4.5-10.6-7-17-7H256v128h128v-6.1c0-6.3-2.5-12.4-7-16.9zm-153 31V0H24C10.7 0 0 10.7 0 24v464c0 13.3 10.7 24 24 24h336c13.3 0 24-10.7 24-24V160H248c-13.2 0-24-10.8-24-24zM64 72c0-4.42 3.58-8 8-8h80c4.42 0 8 3.58 8 8v16c0 4.42-3.58 8-8 8H72c-4.42 0-8-3.58-8-8V72zm0 80v-16c0-4.42 3.58-8 8-8h80c4.42 0 8 3.58 8 8v16c0 4.42-3.58 8-8 8H72c-4.42 0-8-3.58-8-8zm144 263.88V440c0 4.42-3.58 8-8 8h-16c-4.42 0-8-3.58-8-8v-24.29c-11.29-.58-22.27-4.52-31.37-11.35-3.9-2.93-4.1-8.77-.57-12.14l11.75-11.21c2.77-2.64 6.89-2.76 10.13-.73 3.87 2.42 8.26 3.72 12.82 3.72h28.11c6.5 0 11.8-5.92 11.8-13.190 0-5.95-3.61-11.19-8.77-12.73l-45-13.5c-18.59-5.58-31.58-23.42-31.58-43.39 0-24.52 19.05-44.44 42.67-45.07V232c0-4.42 3.58-8 8-8h16c4.42 0 8 3.58 8 8v24.29c11.29.58 22.27 4.51 31.37 11.35 3.9 2.93 4.1 8.77.57 12.14l-11.75 11.21c-2.77 2.64-6.89 2.76-10.130.73-3.87-2.43-8.26-3.72-12.82-3.72h-28.11c-6.5 0-11.8 5.92-11.8 13.19 0 5.95 3.61 11.19 8.77 12.73l45 13.5c18.59 5.58 31.58 23.42 31.58 43.39 0 24.530-19.05 44.44-42.67 45.07z"/></svg>
<div class="t" style="left:793px;top:187.34px;font-size:12px;line-height:12px;color:#666;font-weight:700;">INVOICES</div>
<div class="t" style="left:793px;top:207.95px;font-size:14px;line-height:14px;color:#0a1464;font-weight:400;letter-spacing:-0.18px;">Unpaid</div>
<div class="a" style="left:975px;top:207.2px;display:flex;gap:4px"><div class="bdg bg">26</div><div class="bdg bw"><svg style="display:inline-block;vertical-align:-1px;width:11.6px;height:11.6px;margin-right:2.8px" viewBox="0 0 512 512"><path fill="#fff" fill-rule="evenodd" d="M256 32Q279 33 291 52L507 420Q517 440 507 460Q495 479 472 480H40Q17 479 5 460Q-5 440 5 420L222 52Q234 33 256 32ZM256 160Q234 162 232 184V296Q234 318 256 320Q278 318 280 296V184Q278 162 256 160ZM288 384Q288 370 279 361Q270 352 256 352Q242 352 233 361Q224 370 224 384Q224 398 233 407Q242 416 256 416Q270 416 279 407Q288 398 288 384Z"/></svg>9</div></div>
<div class="card" style="left:1091px;top:179px;width:366px"><div class="ib"></div></div>
<svg class="a" style="left:1119.06px;top:212.30px;width:33.07px;height:29.40px;" viewBox="0 0 576 512"><path fill="#6b9eae" fill-rule="evenodd" d="M64 0Q37 1 19 19Q1 37 0 64V448Q1 475 19 493Q37 511 64 512H320Q347 511 365 493Q383 475 384 448V429Q380 430 376 431L316 446Q311 447 307 448Q305 448 304 448H240Q230 448 226 439L217 422Q214 416 208 416Q202 416 199 422L190 439Q185 448 175 448Q164 447 161 437L144 381L134 414Q123 446 88 448H80Q65 447 64 432Q65 417 80 416H88Q100 415 104 405L118 355Q125 337 144 336Q163 337 170 355L181 394Q193 384 208 384Q233 385 246 407L250 416H259Q254 403 257 388L272 328Q277 311 289 298L384 204V160H256Q242 160 233 151Q224 142 224 128V0H64ZM256 0V128V0V128H384L256 0ZM550 140Q537 128 522 128Q506 128 493 140L464 169L535 240L564 211Q576 198 576 182Q576 166 564 154L550 140ZM312 321Q306 327 304 336L289 396Q287 405 293 411Q299 417 308 415L368 400Q377 398 383 392L512 263L441 192L312 321Z"/></svg>
<div class="t" style="left:1186px;top:187.34px;font-size:12px;line-height:12px;color:#666;font-weight:700;">VENDOR PROPOSALS</div>
<div class="t" style="left:1186px;top:207.95px;font-size:14px;line-height:14px;color:#0a1464;font-weight:400;letter-spacing:-0.18px;">To accept | refuse</div>
<div class="t" style="left:1369px;top:207.95px;font-size:14px;line-height:14px;color:#9aa3c8;font-weight:400;">0</div>
<div class="t" style="left:1186px;top:228.95px;font-size:14px;line-height:14px;color:#0a1464;font-weight:400;letter-spacing:-0.18px;">To close</div>
<div class="t" style="left:1369px;top:228.95px;font-size:14px;line-height:14px;color:#9aa3c8;font-weight:400;">0</div>
<div class="card" style="left:1485px;top:179px;width:365px"><div class="ib"></div></div>
<svg class="a" style="left:1518.17px;top:212.30px;width:22.05px;height:29.40px;" viewBox="0 0 384 512"><path fill="#6b9eae" fill-rule="evenodd" d="M288 256H96v64h192v-64zm89-151L279.1 7c-4.5-4.5-10.6-7-17-7H256v128h128v-6.1c0-6.3-2.5-12.4-7-16.9zm-153 31V0H24C10.7 0 0 10.7 0 24v464c0 13.3 10.7 24 24 24h336c13.3 0 24-10.7 24-24V160H248c-13.2 0-24-10.8-24-24zM64 72c0-4.42 3.58-8 8-8h80c4.42 0 8 3.58 8 8v16c0 4.42-3.58 8-8 8H72c-4.42 0-8-3.58-8-8V72zm0 64c0-4.42 3.58-8 8-8h80c4.42 0 8 3.58 8 8v16c0 4.42-3.58 8-8 8H72c-4.42 0-8-3.58-8-8v-16zm256 304c0 4.42-3.58 8-8 8h-80c-4.42 0-8-3.58-8-8v-16c0-4.42 3.58-8 8-8h80c4.42 0 8 3.58 8 8v16zm0-200v96c0 8.84-7.16 16-16 16H80c-8.84 0-16-7.16-16-16v-96c0-8.84 7.16-16 16-16h224c8.84 0 16 7.16 16 16z"/></svg>
<div class="t" style="left:1580px;top:187.34px;font-size:12px;line-height:12px;color:#666;font-weight:700;">PURCHASE ORDERS</div>
<div class="t" style="left:1580px;top:207.95px;font-size:14px;line-height:14px;color:#0a1464;font-weight:400;letter-spacing:-0.18px;">Open</div>
<div class="a" style="left:1762px;top:207.2px;display:flex;gap:4px"><div class="bdg bg">1</div><div class="bdg bw"><svg style="display:inline-block;vertical-align:-1px;width:11.6px;height:11.6px;margin-right:2.8px" viewBox="0 0 512 512"><path fill="#fff" fill-rule="evenodd" d="M256 32Q279 33 291 52L507 420Q517 440 507 460Q495 479 472 480H40Q17 479 5 460Q-5 440 5 420L222 52Q234 33 256 32ZM256 160Q234 162 232 184V296Q234 318 256 320Q278 318 280 296V184Q278 162 256 160ZM288 384Q288 370 279 361Q270 352 256 352Q242 352 233 361Q224 370 224 384Q224 398 233 407Q242 416 256 416Q270 416 279 407Q288 398 288 384Z"/></svg>1</div></div>
<div class="t" style="left:1580px;top:228.95px;font-size:14px;line-height:14px;color:#0a1464;font-weight:400;letter-spacing:-0.18px;">Awaiting reception</div>
<div class="a" style="left:1762px;top:228.2px;display:flex;gap:4px"><div class="bdg bg">1</div></div>
<div class="card" style="left:304px;top:295px;width:366px"><div class="ib"></div></div>
<svg class="a" style="left:337.57px;top:328.30px;width:22.05px;height:29.40px;" viewBox="0 0 384 512"><path fill="#6b9eae" fill-rule="evenodd" d="M377 105L279.1 7c-4.5-4.5-10.6-7-17-7H256v128h128v-6.1c0-6.3-2.5-12.4-7-16.9zm-153 31V0H24C10.7 0 0 10.7 0 24v464c0 13.3 10.7 24 24 24h336c13.3 0 24-10.7 24-24V160H248c-13.2 0-24-10.8-24-24zM64 72c0-4.42 3.58-8 8-8h80c4.42 0 8 3.58 8 8v16c0 4.42-3.58 8-8 8H72c-4.42 0-8-3.58-8-8V72zm0 80v-16c0-4.42 3.58-8 8-8h80c4.42 0 8 3.58 8 8v16c0 4.42-3.58 8-8 8H72c-4.42 0-8-3.58-8-8zm144 263.88V440c0 4.42-3.58 8-8 8h-16c-4.42 0-8-3.58-8-8v-24.29c-11.29-.58-22.27-4.52-31.37-11.35-3.9-2.93-4.1-8.77-.57-12.14l11.75-11.21c2.77-2.64 6.89-2.76 10.13-.73 3.87 2.42 8.26 3.72 12.82 3.72h28.11c6.5 0 11.8-5.92 11.8-13.190 0-5.95-3.61-11.19-8.77-12.73l-45-13.5c-18.59-5.58-31.58-23.42-31.58-43.39 0-24.52 19.05-44.44 42.67-45.07V232c0-4.42 3.58-8 8-8h16c4.42 0 8 3.58 8 8v24.29c11.29.58 22.27 4.51 31.37 11.35 3.9 2.93 4.1 8.77.57 12.14l-11.75 11.21c-2.77 2.64-6.89 2.76-10.130.73-3.87-2.43-8.26-3.72-12.82-3.72h-28.11c-6.5 0-11.8 5.92-11.8 13.19 0 5.95 3.61 11.19 8.77 12.73l45 13.5c18.59 5.58 31.58 23.42 31.58 43.39 0 24.530-19.05 44.44-42.67 45.07z"/></svg>
<div class="t" style="left:399px;top:303.34px;font-size:12px;line-height:12px;color:#666;font-weight:700;">VENDOR INVOICES</div>
<div class="t" style="left:399px;top:323.95px;font-size:14px;line-height:14px;color:#0a1464;font-weight:400;letter-spacing:-0.18px;">To pay</div>
<div class="a" style="left:582px;top:323.2px;display:flex;gap:4px"><div class="bdg bg">8</div><div class="bdg bw"><svg style="display:inline-block;vertical-align:-1px;width:11.6px;height:11.6px;margin-right:2.8px" viewBox="0 0 512 512"><path fill="#fff" fill-rule="evenodd" d="M256 32Q279 33 291 52L507 420Q517 440 507 460Q495 479 472 480H40Q17 479 5 460Q-5 440 5 420L222 52Q234 33 256 32ZM256 160Q234 162 232 184V296Q234 318 256 320Q278 318 280 296V184Q278 162 256 160ZM288 384Q288 370 279 361Q270 352 256 352Q242 352 233 361Q224 370 224 384Q224 398 233 407Q242 416 256 416Q270 416 279 407Q288 398 288 384Z"/></svg>7</div></div>
<div class="card" style="left:698px;top:295px;width:365px"><div class="ib"></div></div>
<svg class="a" style="left:727.50px;top:328.30px;width:29.40px;height:29.40px;" viewBox="0 0 512 512"><path fill="#5dbaa4" fill-rule="evenodd" d="M128 480h256V80c0-26.5-21.5-48-48-48H176c-26.5 0-48 21.5-48 48v400zM192 96h128v32H192V96zm320 80v256c0 26.5-21.5 48-48 48h-48V128h48c26.5 0 48 21.5 48 48zM96 480H48c-26.5 0-48-21.5-48-48V176c0-26.5 21.5-48 48-48h48v352z"/></svg>
<div class="t" style="left:793px;top:303.34px;font-size:12px;line-height:12px;color:#666;font-weight:700;">CONTRACTS</div>
<div class="t" style="left:793px;top:323.95px;font-size:14px;line-height:14px;color:#0a1464;font-weight:400;letter-spacing:-0.18px;">Services to activate</div>
<div class="a" style="left:975px;top:323.2px;display:flex;gap:4px"><div class="bdg bg">2</div><div class="bdg bw"><svg style="display:inline-block;vertical-align:-1px;width:11.6px;height:11.6px;margin-right:2.8px" viewBox="0 0 512 512"><path fill="#fff" fill-rule="evenodd" d="M256 32Q279 33 291 52L507 420Q517 440 507 460Q495 479 472 480H40Q17 479 5 460Q-5 440 5 420L222 52Q234 33 256 32ZM256 160Q234 162 232 184V296Q234 318 256 320Q278 318 280 296V184Q278 162 256 160ZM288 384Q288 370 279 361Q270 352 256 352Q242 352 233 361Q224 370 224 384Q224 398 233 407Q242 416 256 416Q270 416 279 407Q288 398 288 384Z"/></svg>2</div></div>
<div class="t" style="left:793px;top:344.95px;font-size:14px;line-height:14px;color:#0a1464;font-weight:400;letter-spacing:-0.18px;">Services running</div>
<div class="a" style="left:975px;top:344.2px;display:flex;gap:4px"><div class="bdg bg">4</div><div class="bdg bw"><svg style="display:inline-block;vertical-align:-1px;width:11.6px;height:11.6px;margin-right:2.8px" viewBox="0 0 512 512"><path fill="#fff" fill-rule="evenodd" d="M256 32Q279 33 291 52L507 420Q517 440 507 460Q495 479 472 480H40Q17 479 5 460Q-5 440 5 420L222 52Q234 33 256 32ZM256 160Q234 162 232 184V296Q234 318 256 320Q278 318 280 296V184Q278 162 256 160ZM288 384Q288 370 279 361Q270 352 256 352Q242 352 233 361Q224 370 224 384Q224 398 233 407Q242 416 256 416Q270 416 279 407Q288 398 288 384Z"/></svg>4</div></div>
<div class="card" style="left:1091px;top:295px;width:366px"><div class="ib"></div></div>
<svg class="a" style="left:1119.06px;top:328.30px;width:33.07px;height:29.40px;" viewBox="0 0 576 512"><path fill="#5dbaa4" fill-rule="evenodd" d="M128 160h320v192H128V160zm400 96c0 26.51 21.49 48 48 48v96c0 26.51-21.49 48-48 48H48c-26.51 0-48-21.49-48-48v-96c26.51 0 48-21.49 48-48s-21.49-48-48-48v-96c0-26.51 21.49-48 48-48h480c26.51 0 48 21.49 48 48v96c-26.51 0-48 21.49-48 48zm-48-104c0-13.255-10.745-24-24-24H120c-13.255 0-24 10.745-24 24v208c0 13.255 10.745 24 24 24h336c13.255 0 24-10.745 24-24V152z"/></svg>
<div class="t" style="left:1186px;top:303.34px;font-size:12px;line-height:12px;color:#666;font-weight:700;">TICKETS</div>
<div class="t" style="left:1186px;top:323.95px;font-size:14px;line-height:14px;color:#0a1464;font-weight:400;letter-spacing:-0.18px;">Open tickets</div>
<div class="a" style="left:1369px;top:323.2px;display:flex;gap:4px"><div class="bdg bg">5</div></div>
<div class="card" style="left:1485px;top:295px;width:365px"><div class="ib"></div></div>
<svg class="a" style="left:1514.50px;top:328.30px;width:29.40px;height:29.40px;" viewBox="0 0 512 512"><path fill="#b7b85e" fill-rule="evenodd" d="M496 128v16a8 8 0 0 1-8 8h-24v12c0 6.627-5.373 12-12 12H60c-6.627 0-12-5.373-12-12v-12H24a8 8 0 0 1-8-8v-16a16 16 0 0 1 9.876-14.774l224-88a16 16 0 0 1 12.248 0l224 88A16 16 0 0 1 496 128zm-24 304H40c-13.255 0-24 10.745-24 24v16a8 8 0 0 0 8 8h464a8 8 0 0 0 8-8v-16c0-13.255-10.745-24-24-24zM96 192v192H60c-6.627 0-12 5.373-12 12v20h416v-20c0-6.627-5.373-12-12-12h-36V192h-64v192h-64V192h-64v192h-64V192H96z"/></svg>
<div class="t" style="left:1580px;top:303.34px;font-size:12px;line-height:12px;color:#666;font-weight:700;">BANK ACCOUNT</div>
<div class="t" style="left:1580px;top:323.95px;font-size:14px;line-height:14px;color:#0a1464;font-weight:400;letter-spacing:-0.18px;">To reconcile</div>
<div class="a" style="left:1762px;top:323.2px;display:flex;gap:4px"><div class="bdg bg">37</div><div class="bdg bw"><svg style="display:inline-block;vertical-align:-1px;width:11.6px;height:11.6px;margin-right:2.8px" viewBox="0 0 512 512"><path fill="#fff" fill-rule="evenodd" d="M256 32Q279 33 291 52L507 420Q517 440 507 460Q495 479 472 480H40Q17 479 5 460Q-5 440 5 420L222 52Q234 33 256 32ZM256 160Q234 162 232 184V296Q234 318 256 320Q278 318 280 296V184Q278 162 256 160ZM288 384Q288 370 279 361Q270 352 256 352Q242 352 233 361Q224 370 224 384Q224 398 233 407Q242 416 256 416Q270 416 279 407Q288 398 288 384Z"/></svg>34</div></div>
<div class="t" style="left:1580px;top:344.95px;font-size:14px;line-height:14px;color:#0a1464;font-weight:400;letter-spacing:-0.18px;">Checks awaiting deposit</div>
<div class="a" style="left:1762px;top:344.2px;display:flex;gap:4px"><div class="bdg bg">4</div><div class="bdg bw"><svg style="display:inline-block;vertical-align:-1px;width:11.6px;height:11.6px;margin-right:2.8px" viewBox="0 0 512 512"><path fill="#fff" fill-rule="evenodd" d="M256 32Q279 33 291 52L507 420Q517 440 507 460Q495 479 472 480H40Q17 479 5 460Q-5 440 5 420L222 52Q234 33 256 32ZM256 160Q234 162 232 184V296Q234 318 256 320Q278 318 280 296V184Q278 162 256 160ZM288 384Q288 370 279 361Q270 352 256 352Q242 352 233 361Q224 370 224 384Q224 398 233 407Q242 416 256 416Q270 416 279 407Q288 398 288 384Z"/></svg>4</div></div>
<div class="card" style="left:304px;top:411px;width:366px"><div class="ib"></div></div>
<svg class="a" style="left:335.74px;top:444.30px;width:25.72px;height:29.40px;" viewBox="0 0 448 512"><path fill="#765b30" fill-rule="evenodd" d="M224 256Q259 256 288 239Q317 222 335 192Q352 162 352 128Q352 94 335 64Q317 34 288 17Q259 0 224 0Q189 0 160 17Q131 34 113 64Q96 94 96 128Q96 162 113 192Q131 222 160 239Q189 256 224 256ZM178 304Q103 306 52 356Q2 407 0 482Q0 495 9 503Q17 512 30 512H418Q431 512 439 503Q448 495 448 482Q446 407 396 356Q345 306 270 304H178Z"/></svg>
<div class="t" style="left:399px;top:419.34px;font-size:12px;line-height:12px;color:#666;font-weight:700;">MEMBERS</div>
<div class="t" style="left:399px;top:439.95px;font-size:14px;line-height:14px;color:#0a1464;font-weight:400;letter-spacing:-0.18px;">To validate</div>
<div class="t" style="left:582px;top:439.95px;font-size:14px;line-height:14px;color:#9aa3c8;font-weight:400;">0</div>
<div class="t" style="left:399px;top:460.95px;font-size:14px;line-height:14px;color:#0a1464;font-weight:400;letter-spacing:-0.18px;">Contributions to receive</div>
<div class="a" style="left:582px;top:460.2px;display:flex;gap:4px"><div class="bdg bg">3</div><div class="bdg bw"><svg style="display:inline-block;vertical-align:-1px;width:11.6px;height:11.6px;margin-right:2.8px" viewBox="0 0 512 512"><path fill="#fff" fill-rule="evenodd" d="M256 32Q279 33 291 52L507 420Q517 440 507 460Q495 479 472 480H40Q17 479 5 460Q-5 440 5 420L222 52Q234 33 256 32ZM256 160Q234 162 232 184V296Q234 318 256 320Q278 318 280 296V184Q278 162 256 160ZM288 384Q288 370 279 361Q270 352 256 352Q242 352 233 361Q224 370 224 384Q224 398 233 407Q242 416 256 416Q270 416 279 407Q288 398 288 384Z"/></svg>3</div></div>
<div class="card" style="left:698px;top:411px;width:365px"><div class="ib"></div></div>
<svg class="a" style="left:727.50px;top:444.30px;width:29.40px;height:29.40px;" viewBox="0 0 512 512"><path fill="#765b30" fill-rule="evenodd" d="M64 32Q37 33 19 51Q1 69 0 96V416Q1 443 19 461Q37 479 64 480H448Q475 479 493 461Q511 443 512 416V192Q511 165 493 147Q475 129 448 128H80Q65 127 64 112Q65 97 80 96H448Q462 96 471 87Q480 78 480 64Q480 50 471 41Q462 32 448 32H64ZM416 272Q430 272 439 281Q448 290 448 304Q448 318 439 327Q430 336 416 336Q402 336 393 327Q384 318 384 304Q384 290 393 281Q402 272 416 272Z"/></svg>
<div class="t" style="left:793px;top:419.34px;font-size:12px;line-height:12px;color:#666;font-weight:700;">EXPENSE REPORT</div>
<div class="t" style="left:793px;top:439.95px;font-size:14px;line-height:14px;color:#0a1464;font-weight:400;letter-spacing:-0.18px;">To approve</div>
<div class="t" style="left:975px;top:439.95px;font-size:14px;line-height:14px;color:#9aa3c8;font-weight:400;">0</div>
<div class="t" style="left:793px;top:460.95px;font-size:14px;line-height:14px;color:#0a1464;font-weight:400;letter-spacing:-0.18px;">To pay</div>
<div class="a" style="left:975px;top:460.2px;display:flex;gap:4px"><div class="bdg bg">1</div><div class="bdg bw"><svg style="display:inline-block;vertical-align:-1px;width:11.6px;height:11.6px;margin-right:2.8px" viewBox="0 0 512 512"><path fill="#fff" fill-rule="evenodd" d="M256 32Q279 33 291 52L507 420Q517 440 507 460Q495 479 472 480H40Q17 479 5 460Q-5 440 5 420L222 52Q234 33 256 32ZM256 160Q234 162 232 184V296Q234 318 256 320Q278 318 280 296V184Q278 162 256 160ZM288 384Q288 370 279 361Q270 352 256 352Q242 352 233 361Q224 370 224 384Q224 398 233 407Q242 416 256 416Q270 416 279 407Q288 398 288 384Z"/></svg>1</div></div>
<div class="card" style="left:1091px;top:411px;width:366px"><div class="ib"></div></div>
<svg class="a" style="left:1119.06px;top:444.30px;width:33.07px;height:29.40px;" viewBox="0 0 576 512"><path fill="#765b30" fill-rule="evenodd" d="M346 272 286 250 346 272 286 250 214 448H32Q18 448 9 457Q0 466 0 480Q0 494 9 503Q18 512 32 512H544Q558 512 567 503Q576 494 576 480Q576 466 567 457Q558 448 544 448H282L346 272ZM467 272 464 281 467 272 464 281 532 305Q546 310 558 303Q570 297 571 282Q576 222 555 168Q534 114 491 73Q494 85 494 98V104Q497 190 467 272ZM462 99Q461 73 446 52Q432 32 408 22Q407 21 406 21Q405 21 405 21Q380 12 355 18Q330 25 312 44L308 49Q254 109 227 184L224 193L434 270L437 261Q465 185 462 105V99ZM107 113Q99 125 104 138Q109 151 123 156L194 182L197 173Q226 92 284 28L288 23Q297 13 308 5Q248 7 195 35Q143 63 107 113Z"/></svg>
<div class="t" style="left:1186px;top:419.34px;font-size:12px;line-height:12px;color:#666;font-weight:700;">LEAVE</div>
<div class="t" style="left:1186px;top:439.95px;font-size:14px;line-height:14px;color:#0a1464;font-weight:400;letter-spacing:-0.18px;">To approve</div>
<div class="t" style="left:1369px;top:439.95px;font-size:14px;line-height:14px;color:#9aa3c8;font-weight:400;">0</div>
<div class="card" style="left:1485px;top:411px;width:365px"><div class="ib"></div></div>
<svg class="a" style="left:1514.50px;top:444.30px;width:29.40px;height:29.40px;" viewBox="0 0 512 512"><path fill="#b7b85e" fill-rule="evenodd" d="M488.6 250.2L392 214V105.5c0-15-9.3-28.4-23.4-33.7l-100-37.5c-8.1-3.1-17.1-3.1-25.3 0l-100 37.5c-14.1 5.3-23.4 18.7-23.4 33.7V214l-96.6 36.2C9.3 255.5 0 268.9 0 283.9V394c0 13.6 7.7 26.1 19.9 32.2l100 50c10.1 5.1 22.1 5.1 32.2 0l103.9-52 103.9 52c10.1 5.1 22.1 5.1 32.2 0l100-50c12.2-6.1 19.9-18.6 19.9-32.2V283.9c0-15-9.3-28.4-23.4-33.700zM358 214.8l-85 31.9v-68.2l85-37v73.3zM154 104.1l102-38.2 102 38.2v.6l-102 41.4-102-41.4v-.6zm84 291.1l-85 42.5v-79.1l85-38.8v75.4zm0-112l-102 41.4-102-41.4v-.6l102-38.2 102 38.2v.6zm240 112l-85 42.5v-79.1l85-38.8v75.4zm0-112l-102 41.4-102-41.4v-.6l102-38.2 102 38.2v.6z"/></svg>
<div class="t" style="left:1580px;top:419.34px;font-size:12px;line-height:12px;color:#666;font-weight:700;">MANUFACTURING</div>
<div class="t" style="left:1580px;top:439.95px;font-size:14px;line-height:14px;color:#0a1464;font-weight:400;letter-spacing:-0.18px;">In progress</div>
<div class="a" style="left:1762px;top:439.2px;display:flex;gap:4px"><div class="bdg bg">7</div></div>
<div class="panel" style="left:302px;top:562px;width:760px;height:162px"><div class="ph"></div></div>
<div class="t" style="left:315px;top:576.90px;font-size:15px;line-height:15px;color:#333;font-weight:400;letter-spacing:-0.1px;">Login Information</div>
<svg class="a" style="left:1015.90px;top:576.80px;width:15.00px;height:15.00px;" viewBox="0 0 512 512"><path fill="#a3a2b0" fill-rule="evenodd" d="M352.201 425.775l-79.196 79.196c-9.373 9.373-24.568 9.373-33.941 0l-79.196-79.196c-15.119-15.119-4.411-40.971 16.971-40.970h51.162L228 284H127.196v51.162c0 21.382-25.851 32.09-40.971 16.971L7.029 273.937c-9.373-9.373-9.373-24.569 0-33.941L86.225 160.8c15.119-15.119 40.971-4.411 40.971 16.971V229H228V128.196h-51.23c-21.382 0-32.09-25.851-16.971-40.971l79.196-79.196c9.373-9.373 24.568-9.373 33.941 0l79.196 79.196c15.119 15.119 4.411 40.971-16.971 40.971h-51.162V229h100.804v-51.162c0-21.382 25.851-32.09 40.970-16.971l79.196 79.196c9.373 9.373 9.373 24.569 0 33.941L425.773 352.2c-15.119 15.119-40.971 4.411-40.970-16.971V284H284v100.804h51.23c21.382 0 32.09 25.851 16.971 40.971z"/></svg>
<svg class="a" style="left:1041.08px;top:576.70px;width:10.45px;height:15.20px;" viewBox="0 0 352 512"><path fill="#a3a2b0" fill-rule="evenodd" d="M242.72 256l100.07-100.07c12.28-12.28 12.28-32.19 0-44.48l-22.24-22.24c-12.28-12.28-32.19-12.28-44.48 0L176 189.28 75.93 89.21c-12.28-12.28-32.19-12.28-44.48 0L9.21 111.45c-12.28 12.28-12.28 32.19 0 44.48L109.28 256 9.21 356.07c-12.28 12.28-12.28 32.19 0 44.48l22.24 22.24c12.28 12.28 32.2 12.28 44.48 0L176 322.72l100.07 100.07c12.28 12.28 32.2 12.28 44.48 0l22.24-22.240c12.28-12.28 12.28-32.19 0-44.48L242.72 256z"/></svg>
<div class="a" style="left:303px;top:648px;width:758px;height:1px;background:#e8e8e8"></div>
<div class="a" style="left:303px;top:649px;width:758px;height:36px;background:#fafafa"></div>
<div class="a" style="left:303px;top:685px;width:758px;height:1px;background:#e8e8e8"></div>
<div class="t" style="left:315px;top:619.00px;font-size:15px;line-height:15px;color:#222;font-weight:400;letter-spacing:-0.1px;">User</div>
<div class="t" style="left:315px;top:659.20px;font-size:15px;line-height:15px;color:#222;font-weight:400;letter-spacing:-0.1px;">Previous login</div>
<div class="t" style="left:315px;top:696.30px;font-size:15px;line-height:15px;color:#222;font-weight:400;letter-spacing:-0.15px;">Last password change</div>
<svg class="a" style="left:579px;top:619px;width:21px;height:21px" viewBox="0 0 32 32"><defs><clipPath id="av2"><circle cx="16" cy="16" r="16"/></clipPath></defs><g clip-path="url(#av2)"><rect width="32" height="32" fill="#3f4042"/><rect x="2" y="8" width="6" height="10" fill="#6d6e70" transform="rotate(-20 5 13)"/><rect x="21" y="4" width="9" height="9" fill="#77787a" transform="rotate(25 25 8)"/><rect x="7" y="12" width="3" height="9" fill="#d8d8d8" transform="rotate(-25 8 16)"/><rect x="26" y="14" width="3" height="5" fill="#cfcfcf"/><circle cx="23.5" cy="14" r="1.6" fill="#3fae5a"/><circle cx="11.5" cy="8.5" r="1" fill="#c04040"/><rect x="10" y="2" width="12" height="5" fill="#4c5058"/><ellipse cx="15.8" cy="10.3" rx="4.1" ry="6.5" fill="#c49a86"/><path d="M2 32 L4 21 Q7 18 12 16.5 L16 17.5 L20 16.5 Q25 18 28 21 L30 32 Z" fill="#ebe6e2"/><rect x="9" y="22" width="14" height="1.6" fill="#a68a76"/></g></svg>
<div class="t" style="left:602px;top:620.40px;font-size:15px;line-height:15px;color:#0a1464;font-weight:400;letter-spacing:-0.1px;">Alice Adminson</div>
<div class="t" style="left:579px;top:659.20px;font-size:15px;line-height:15px;color:#222;font-weight:400;letter-spacing:-0.1px;">10/19/2025 03:11 PM - <span style="color:#999">From IP 24.19.216.91</span></div>
<div class="t" style="left:579px;top:696.30px;font-size:15px;line-height:15px;color:#222;font-weight:400;letter-spacing:-0.1px;">03/27/2025 11:27 PM</div>
<div class="panel" style="left:302px;top:763px;width:760px;height:140px"><div class="ph"></div></div>
<div class="t" style="left:315px;top:777.90px;font-size:15px;line-height:15px;color:#333;font-weight:400;letter-spacing:-0.1px;">Vendor Orders per month</div>
<svg class="a" style="left:990.35px;top:777.65px;width:15.30px;height:15.30px;" viewBox="0 0 512 512"><path fill="#a3a2b0" fill-rule="evenodd" d="M487.976 0H24.028C2.71 0-8.047 25.866 7.058 40.971L192 225.941V432c0 7.831 3.821 15.17 10.237 19.662l80 55.98C298.02 518.69 320 507.493 320 487.98V225.941l184.947-184.97C520.021 25.896 509.338 0 487.976 0z"/></svg>
<svg class="a" style="left:1015.90px;top:777.80px;width:15.00px;height:15.00px;" viewBox="0 0 512 512"><path fill="#a3a2b0" fill-rule="evenodd" d="M352.201 425.775l-79.196 79.196c-9.373 9.373-24.568 9.373-33.941 0l-79.196-79.196c-15.119-15.119-4.411-40.971 16.971-40.970h51.162L228 284H127.196v51.162c0 21.382-25.851 32.09-40.971 16.971L7.029 273.937c-9.373-9.373-9.373-24.569 0-33.941L86.225 160.8c15.119-15.119 40.971-4.411 40.971 16.971V229H228V128.196h-51.23c-21.382 0-32.09-25.851-16.971-40.971l79.196-79.196c9.373-9.373 24.568-9.373 33.941 0l79.196 79.196c15.119 15.119 4.411 40.971-16.971 40.971h-51.162V229h100.804v-51.162c0-21.382 25.851-32.09 40.970-16.971l79.196 79.196c9.373 9.373 9.373 24.569 0 33.941L425.773 352.2c-15.119 15.119-40.971 4.411-40.970-16.971V284H284v100.804h51.23c21.382 0 32.09 25.851 16.971 40.971z"/></svg>
<svg class="a" style="left:1041.08px;top:777.70px;width:10.45px;height:15.20px;" viewBox="0 0 352 512"><path fill="#a3a2b0" fill-rule="evenodd" d="M242.72 256l100.07-100.07c12.28-12.28 12.28-32.19 0-44.48l-22.24-22.24c-12.28-12.28-32.19-12.28-44.48 0L176 189.28 75.93 89.21c-12.28-12.28-32.19-12.28-44.48 0L9.21 111.45c-12.28 12.28-12.28 32.19 0 44.48L109.28 256 9.21 356.07c-12.28 12.28-12.28 32.19 0 44.48l22.24 22.24c12.28 12.28 32.2 12.28 44.48 0L176 322.72l100.07 100.07c12.28 12.28 32.2 12.28 44.48 0l22.24-22.240c12.28-12.28 12.28-32.19 0-44.48L242.72 256z"/></svg>
<div class="panel" style="left:1102px;top:562px;width:760px;height:305px"><div class="ph"></div></div>
<div class="t" style="left:1115px;top:576.90px;font-size:15px;line-height:15px;color:#333;font-weight:400;letter-spacing:-0.1px;">Sales Orders per month</div>
<svg class="a" style="left:1790.35px;top:576.65px;width:15.30px;height:15.30px;" viewBox="0 0 512 512"><path fill="#a3a2b0" fill-rule="evenodd" d="M487.976 0H24.028C2.71 0-8.047 25.866 7.058 40.971L192 225.941V432c0 7.831 3.821 15.17 10.237 19.662l80 55.98C298.02 518.69 320 507.493 320 487.98V225.941l184.947-184.97C520.021 25.896 509.338 0 487.976 0z"/></svg>
<svg class="a" style="left:1815.90px;top:576.80px;width:15.00px;height:15.00px;" viewBox="0 0 512 512"><path fill="#a3a2b0" fill-rule="evenodd" d="M352.201 425.775l-79.196 79.196c-9.373 9.373-24.568 9.373-33.941 0l-79.196-79.196c-15.119-15.119-4.411-40.971 16.971-40.970h51.162L228 284H127.196v51.162c0 21.382-25.851 32.09-40.971 16.971L7.029 273.937c-9.373-9.373-9.373-24.569 0-33.941L86.225 160.8c15.119-15.119 40.971-4.411 40.971 16.971V229H228V128.196h-51.23c-21.382 0-32.09-25.851-16.971-40.971l79.196-79.196c9.373-9.373 24.568-9.373 33.941 0l79.196 79.196c15.119 15.119 4.411 40.971-16.971 40.971h-51.162V229h100.804v-51.162c0-21.382 25.851-32.09 40.970-16.971l79.196 79.196c9.373 9.373 9.373 24.569 0 33.941L425.773 352.2c-15.119 15.119-40.971 4.411-40.970-16.971V284H284v100.804h51.23c21.382 0 32.09 25.851 16.971 40.971z"/></svg>
<svg class="a" style="left:1841.08px;top:576.70px;width:10.45px;height:15.20px;" viewBox="0 0 352 512"><path fill="#a3a2b0" fill-rule="evenodd" d="M242.72 256l100.07-100.07c12.28-12.28 12.28-32.19 0-44.48l-22.24-22.24c-12.28-12.28-32.19-12.28-44.48 0L176 189.28 75.93 89.21c-12.28-12.28-32.19-12.28-44.48 0L9.21 111.45c-12.28 12.28-12.28 32.19 0 44.48L109.28 256 9.21 356.07c-12.28 12.28-12.28 32.19 0 44.48l22.24 22.24c12.28 12.28 32.2 12.28 44.48 0L176 322.72l100.07 100.07c12.28 12.28 32.2 12.28 44.48 0l22.24-22.240c12.28-12.28 12.28-32.19 0-44.48L242.72 256z"/></svg>
<div class="t" style="left:1289px;top:624.20px;font-size:15px;line-height:15px;color:#1a1a1a;font-weight:400;transform:translateX(-50%);letter-spacing:-0.1px;">Number of orders by month</div>
<div class="a" style="left:1207.2px;top:655.2px;width:16px;height:13px;background:rgba(137,86,161,0.9);border:1px solid rgb(137,86,161)"></div>
<div class="t" style="left:1228.6000000000001px;top:654.12px;font-size:12.5px;line-height:12.5px;color:#666;font-weight:400;">2023</div>
<div class="a" style="left:1264.9px;top:655.2px;width:16px;height:13px;background:rgba(60,147,183,0.9);border:1px solid rgb(60,147,183)"></div>
<div class="t" style="left:1286.3000000000002px;top:654.12px;font-size:12.5px;line-height:12.5px;color:#666;font-weight:400;">2024</div>
<div class="a" style="left:1322.6px;top:655.2px;width:16px;height:13px;background:rgba(250,190,80,0.9);border:1px solid rgb(250,190,80)"></div>
<div class="t" style="left:1344.0000000000002px;top:654.12px;font-size:12.5px;line-height:12.5px;color:#666;font-weight:400;">2025</div>
<svg class="a" style="left:0;top:0;width:1916px;height:881px;pointer-events:none" viewBox="0 0 1916 881"><line x1="1180" y1="809.5" x2="1417" y2="809.5" stroke="rgba(0,0,0,0.22)" stroke-width="1"/><line x1="1180" y1="783.5" x2="1417" y2="783.5" stroke="rgba(0,0,0,0.1)" stroke-width="1"/><line x1="1180" y1="756.5" x2="1417" y2="756.5" stroke="rgba(0,0,0,0.1)" stroke-width="1"/><line x1="1180" y1="730.5" x2="1417" y2="730.5" stroke="rgba(0,0,0,0.1)" stroke-width="1"/><line x1="1180" y1="704.5" x2="1417" y2="704.5" stroke="rgba(0,0,0,0.1)" stroke-width="1"/><line x1="1180" y1="678.5" x2="1417" y2="678.5" stroke="rgba(0,0,0,0.1)" stroke-width="1"/><line x1="1188.5" y1="678.5" x2="1188.5" y2="817.5" stroke="rgba(0,0,0,0.22)" stroke-width="1"/><line x1="1207.5" y1="678.5" x2="1207.5" y2="817.5" stroke="rgba(0,0,0,0.1)" stroke-width="1"/><line x1="1226.5" y1="678.5" x2="1226.5" y2="817.5" stroke="rgba(0,0,0,0.1)" stroke-width="1"/><line x1="1245.5" y1="678.5" x2="1245.5" y2="817.5" stroke="rgba(0,0,0,0.1)" stroke-width="1"/><line x1="1264.5" y1="678.5" x2="1264.5" y2="817.5" stroke="rgba(0,0,0,0.1)" stroke-width="1"/><line x1="1283.5" y1="678.5" x2="1283.5" y2="817.5" stroke="rgba(0,0,0,0.1)" stroke-width="1"/><line x1="1302.5" y1="678.5" x2="1302.5" y2="817.5" stroke="rgba(0,0,0,0.1)" stroke-width="1"/><line x1="1321.5" y1="678.5" x2="1321.5" y2="817.5" stroke="rgba(0,0,0,0.1)" stroke-width="1"/><line x1="1340.5" y1="678.5" x2="1340.5" y2="817.5" stroke="rgba(0,0,0,0.1)" stroke-width="1"/><line x1="1359.5" y1="678.5" x2="1359.5" y2="817.5" stroke="rgba(0,0,0,0.1)" stroke-width="1"/><line x1="1378.5" y1="678.5" x2="1378.5" y2="817.5" stroke="rgba(0,0,0,0.1)" stroke-width="1"/><line x1="1397.5" y1="678.5" x2="1397.5" y2="817.5" stroke="rgba(0,0,0,0.1)" stroke-width="1"/><rect x="1201.31" y="718.10" width="3.57" height="91.20" fill="rgba(250,190,80,0.8)" stroke="rgb(250,190,80)" stroke-width="1"/><rect x="1220.36" y="678.80" width="3.57" height="130.50" fill="rgba(250,190,80,0.8)" stroke="rgb(250,190,80)" stroke-width="1"/><rect x="1239.40" y="796.70" width="3.57" height="12.60" fill="rgba(250,190,80,0.8)" stroke="rgb(250,190,80)" stroke-width="1"/><rect x="1258.44" y="783.60" width="3.57" height="25.70" fill="rgba(250,190,80,0.8)" stroke="rgb(250,190,80)" stroke-width="1"/><rect x="1277.48" y="783.60" width="3.57" height="25.70" fill="rgba(250,190,80,0.8)" stroke="rgb(250,190,80)" stroke-width="1"/><rect x="1296.52" y="783.60" width="3.57" height="25.70" fill="rgba(250,190,80,0.8)" stroke="rgb(250,190,80)" stroke-width="1"/><rect x="1315.56" y="731.20" width="3.57" height="78.10" fill="rgba(250,190,80,0.8)" stroke="rgb(250,190,80)" stroke-width="1"/><rect x="1334.61" y="796.70" width="3.57" height="12.60" fill="rgba(250,190,80,0.8)" stroke="rgb(250,190,80)" stroke-width="1"/><rect x="1353.65" y="796.70" width="3.57" height="12.60" fill="rgba(250,190,80,0.8)" stroke="rgb(250,190,80)" stroke-width="1"/><rect x="1367.61" y="796.70" width="3.57" height="12.60" fill="rgba(60,147,183,0.8)" stroke="rgb(60,147,183)" stroke-width="1"/><rect x="1386.65" y="783.60" width="3.57" height="25.70" fill="rgba(60,147,183,0.8)" stroke="rgb(60,147,183)" stroke-width="1"/><rect x="1405.69" y="757.40" width="3.57" height="51.90" fill="rgba(60,147,183,0.8)" stroke="rgb(60,147,183)" stroke-width="1"/></svg>
<div class="t" style="left:1178.2px;top:803.02px;font-size:12.5px;line-height:12.5px;color:#666;font-weight:400;transform:translateX(-100%);">0</div>
<div class="t" style="left:1178.2px;top:776.82px;font-size:12.5px;line-height:12.5px;color:#666;font-weight:400;transform:translateX(-100%);">2</div>
<div class="t" style="left:1178.2px;top:750.62px;font-size:12.5px;line-height:12.5px;color:#666;font-weight:400;transform:translateX(-100%);">4</div>
<div class="t" style="left:1178.2px;top:724.42px;font-size:12.5px;line-height:12.5px;color:#666;font-weight:400;transform:translateX(-100%);">6</div>
<div class="t" style="left:1178.2px;top:698.22px;font-size:12.5px;line-height:12.5px;color:#666;font-weight:400;transform:translateX(-100%);">8</div>
<div class="t" style="left:1178.2px;top:672.02px;font-size:12.5px;line-height:12.5px;color:#666;font-weight:400;transform:translateX(-100%);">10</div>
<div class="t" style="left:1198.0208333333333px;top:821.92px;font-size:12.5px;line-height:12.5px;color:#666;font-weight:400;transform:translateX(-50%);">J</div>
<div class="t" style="left:1217.0625px;top:821.92px;font-size:12.5px;line-height:12.5px;color:#666;font-weight:400;transform:translateX(-50%);">F</div>
<div class="t" style="left:1236.1041666666667px;top:821.92px;font-size:12.5px;line-height:12.5px;color:#666;font-weight:400;transform:translateX(-50%);">M</div>
<div class="t" style="left:1255.1458333333333px;top:821.92px;font-size:12.5px;line-height:12.5px;color:#666;font-weight:400;transform:translateX(-50%);">A</div>
<div class="t" style="left:1274.1875px;top:821.92px;font-size:12.5px;line-height:12.5px;color:#666;font-weight:400;transform:translateX(-50%);">M</div>
<div class="t" style="left:1293.2291666666667px;top:821.92px;font-size:12.5px;line-height:12.5px;color:#666;font-weight:400;transform:translateX(-50%);">J</div>
<div class="t" style="left:1312.2708333333333px;top:821.92px;font-size:12.5px;line-height:12.5px;color:#666;font-weight:400;transform:translateX(-50%);">J</div>
<div class="t" style="left:1331.3125px;top:821.92px;font-size:12.5px;line-height:12.5px;color:#666;font-weight:400;transform:translateX(-50%);">A</div>
<div class="t" style="left:1350.3541666666667px;top:821.92px;font-size:12.5px;line-height:12.5px;color:#666;font-weight:400;transform:translateX(-50%);">S</div>
<div class="t" style="left:1369.3958333333333px;top:821.92px;font-size:12.5px;line-height:12.5px;color:#666;font-weight:400;transform:translateX(-50%);">O</div>
<div class="t" style="left:1388.4375px;top:821.92px;font-size:12.5px;line-height:12.5px;color:#666;font-weight:400;transform:translateX(-50%);">N</div>
<div class="t" style="left:1407.4791666666667px;top:821.92px;font-size:12.5px;line-height:12.5px;color:#666;font-weight:400;transform:translateX(-50%);">D</div>
<div class="t" style="left:1677px;top:624.00px;font-size:15px;line-height:15px;color:#1a1a1a;font-weight:400;transform:translateX(-50%);letter-spacing:-0.1px;">Amount of orders by month (excl. tax)</div>
<div class="a" style="left:1594.9px;top:655.2px;width:16px;height:13px;background:rgba(137,86,161,0.9);border:1px solid rgb(137,86,161)"></div>
<div class="t" style="left:1616.3000000000002px;top:654.12px;font-size:12.5px;line-height:12.5px;color:#666;font-weight:400;">2023</div>
<div class="a" style="left:1652.6px;top:655.2px;width:16px;height:13px;background:rgba(60,147,183,0.9);border:1px solid rgb(60,147,183)"></div>
<div class="t" style="left:1674.0000000000002px;top:654.12px;font-size:12.5px;line-height:12.5px;color:#666;font-weight:400;">2024</div>
<div class="a" style="left:1710.3px;top:655.2px;width:16px;height:13px;background:rgba(250,190,80,0.9);border:1px solid rgb(250,190,80)"></div>
<div class="t" style="left:1731.7000000000003px;top:654.12px;font-size:12.5px;line-height:12.5px;color:#666;font-weight:400;">2025</div>
<svg class="a" style="left:0;top:0;width:1916px;height:881px;pointer-events:none" viewBox="0 0 1916 881"><line x1="1585" y1="809.5" x2="1805" y2="809.5" stroke="rgba(0,0,0,0.22)" stroke-width="1"/><line x1="1585" y1="790.5" x2="1805" y2="790.5" stroke="rgba(0,0,0,0.1)" stroke-width="1"/><line x1="1585" y1="771.5" x2="1805" y2="771.5" stroke="rgba(0,0,0,0.1)" stroke-width="1"/><line x1="1585" y1="753.5" x2="1805" y2="753.5" stroke="rgba(0,0,0,0.1)" stroke-width="1"/><line x1="1585" y1="734.5" x2="1805" y2="734.5" stroke="rgba(0,0,0,0.1)" stroke-width="1"/><line x1="1585" y1="715.5" x2="1805" y2="715.5" stroke="rgba(0,0,0,0.1)" stroke-width="1"/><line x1="1585" y1="697.5" x2="1805" y2="697.5" stroke="rgba(0,0,0,0.1)" stroke-width="1"/><line x1="1585" y1="678.5" x2="1805" y2="678.5" stroke="rgba(0,0,0,0.1)" stroke-width="1"/><line x1="1592.5" y1="678.5" x2="1592.5" y2="817.5" stroke="rgba(0,0,0,0.22)" stroke-width="1"/><line x1="1610.5" y1="678.5" x2="1610.5" y2="817.5" stroke="rgba(0,0,0,0.1)" stroke-width="1"/><line x1="1628.5" y1="678.5" x2="1628.5" y2="817.5" stroke="rgba(0,0,0,0.1)" stroke-width="1"/><line x1="1645.5" y1="678.5" x2="1645.5" y2="817.5" stroke="rgba(0,0,0,0.1)" stroke-width="1"/><line x1="1663.5" y1="678.5" x2="1663.5" y2="817.5" stroke="rgba(0,0,0,0.1)" stroke-width="1"/><line x1="1681.5" y1="678.5" x2="1681.5" y2="817.5" stroke="rgba(0,0,0,0.1)" stroke-width="1"/><line x1="1698.5" y1="678.5" x2="1698.5" y2="817.5" stroke="rgba(0,0,0,0.1)" stroke-width="1"/><line x1="1716.5" y1="678.5" x2="1716.5" y2="817.5" stroke="rgba(0,0,0,0.1)" stroke-width="1"/><line x1="1734.5" y1="678.5" x2="1734.5" y2="817.5" stroke="rgba(0,0,0,0.1)" stroke-width="1"/><line x1="1751.5" y1="678.5" x2="1751.5" y2="817.5" stroke="rgba(0,0,0,0.1)" stroke-width="1"/><line x1="1769.5" y1="678.5" x2="1769.5" y2="817.5" stroke="rgba(0,0,0,0.1)" stroke-width="1"/><line x1="1787.5" y1="678.5" x2="1787.5" y2="817.5" stroke="rgba(0,0,0,0.1)" stroke-width="1"/><rect x="1604.64" y="783.79" width="3.25" height="25.51" fill="rgba(250,190,80,0.8)" stroke="rgb(250,190,80)" stroke-width="1"/><rect x="1622.33" y="696.02" width="3.25" height="113.28" fill="rgba(250,190,80,0.8)" stroke="rgb(250,190,80)" stroke-width="1"/><rect x="1657.72" y="802.13" width="3.25" height="7.17" fill="rgba(250,190,80,0.8)" stroke="rgb(250,190,80)" stroke-width="1"/><rect x="1675.41" y="799.32" width="3.25" height="9.98" fill="rgba(250,190,80,0.8)" stroke="rgb(250,190,80)" stroke-width="1"/><rect x="1693.10" y="796.61" width="3.25" height="12.69" fill="rgba(250,190,80,0.8)" stroke="rgb(250,190,80)" stroke-width="1"/><rect x="1710.79" y="777.29" width="3.25" height="32.01" fill="rgba(250,190,80,0.8)" stroke="rgb(250,190,80)" stroke-width="1"/><rect x="1728.48" y="809.24" width="3.25" height="0.50" fill="rgba(250,190,80,0.8)" stroke="rgb(250,190,80)" stroke-width="1"/><rect x="1759.15" y="792.49" width="3.25" height="16.81" fill="rgba(60,147,183,0.8)" stroke="rgb(60,147,183)" stroke-width="1"/><rect x="1776.84" y="797.39" width="3.25" height="11.91" fill="rgba(60,147,183,0.8)" stroke="rgb(60,147,183)" stroke-width="1"/><rect x="1794.53" y="768.50" width="3.25" height="40.80" fill="rgba(60,147,183,0.8)" stroke="rgb(60,147,183)" stroke-width="1"/></svg>
<div class="t" style="left:1582.4px;top:803.02px;font-size:12.5px;line-height:12.5px;color:#666;font-weight:400;transform:translateX(-100%);">0</div>
<div class="t" style="left:1582.4px;top:784.30px;font-size:12.5px;line-height:12.5px;color:#666;font-weight:400;transform:translateX(-100%);">1,000</div>
<div class="t" style="left:1582.4px;top:765.59px;font-size:12.5px;line-height:12.5px;color:#666;font-weight:400;transform:translateX(-100%);">2,000</div>
<div class="t" style="left:1582.4px;top:746.88px;font-size:12.5px;line-height:12.5px;color:#666;font-weight:400;transform:translateX(-100%);">3,000</div>
<div class="t" style="left:1582.4px;top:728.16px;font-size:12.5px;line-height:12.5px;color:#666;font-weight:400;transform:translateX(-100%);">4,000</div>
<div class="t" style="left:1582.4px;top:709.45px;font-size:12.5px;line-height:12.5px;color:#666;font-weight:400;transform:translateX(-100%);">5,000</div>
<div class="t" style="left:1582.4px;top:690.73px;font-size:12.5px;line-height:12.5px;color:#666;font-weight:400;transform:translateX(-100%);">6,000</div>
<div class="t" style="left:1582.4px;top:672.02px;font-size:12.5px;line-height:12.5px;color:#666;font-weight:400;transform:translateX(-100%);">7,000</div>
<div class="t" style="left:1601.5458333333333px;top:821.92px;font-size:12.5px;line-height:12.5px;color:#666;font-weight:400;transform:translateX(-50%);">J</div>
<div class="t" style="left:1619.2375px;top:821.92px;font-size:12.5px;line-height:12.5px;color:#666;font-weight:400;transform:translateX(-50%);">F</div>
<div class="t" style="left:1636.9291666666668px;top:821.92px;font-size:12.5px;line-height:12.5px;color:#666;font-weight:400;transform:translateX(-50%);">M</div>
<div class="t" style="left:1654.6208333333334px;top:821.92px;font-size:12.5px;line-height:12.5px;color:#666;font-weight:400;transform:translateX(-50%);">A</div>
<div class="t" style="left:1672.3125px;top:821.92px;font-size:12.5px;line-height:12.5px;color:#666;font-weight:400;transform:translateX(-50%);">M</div>
<div class="t" style="left:1690.0041666666666px;top:821.92px;font-size:12.5px;line-height:12.5px;color:#666;font-weight:400;transform:translateX(-50%);">J</div>
<div class="t" style="left:1707.6958333333334px;top:821.92px;font-size:12.5px;line-height:12.5px;color:#666;font-weight:400;transform:translateX(-50%);">J</div>
<div class="t" style="left:1725.3875px;top:821.92px;font-size:12.5px;line-height:12.5px;color:#666;font-weight:400;transform:translateX(-50%);">A</div>
<div class="t" style="left:1743.0791666666667px;top:821.92px;font-size:12.5px;line-height:12.5px;color:#666;font-weight:400;transform:translateX(-50%);">S</div>
<div class="t" style="left:1760.7708333333333px;top:821.92px;font-size:12.5px;line-height:12.5px;color:#666;font-weight:400;transform:translateX(-50%);">O</div>
<div class="t" style="left:1778.4625px;top:821.92px;font-size:12.5px;line-height:12.5px;color:#666;font-weight:400;transform:translateX(-50%);">N</div>
<div class="t" style="left:1796.1541666666667px;top:821.92px;font-size:12.5px;line-height:12.5px;color:#666;font-weight:400;transform:translateX(-50%);">D</div>
<div class="t" style="left:489px;top:824.30px;font-size:15px;line-height:15px;color:#1a1a1a;font-weight:400;transform:translateX(-50%);letter-spacing:-0.1px;">Number of orders by month</div>
<div class="a" style="left:407.0px;top:856.3px;width:16px;height:13px;background:rgba(137,86,161,0.9);border:1px solid rgb(137,86,161)"></div>
<div class="t" style="left:428.4px;top:855.22px;font-size:12.5px;line-height:12.5px;color:#666;font-weight:400;">2023</div>
<div class="a" style="left:464.7px;top:856.3px;width:16px;height:13px;background:rgba(60,147,183,0.9);border:1px solid rgb(60,147,183)"></div>
<div class="t" style="left:486.09999999999997px;top:855.22px;font-size:12.5px;line-height:12.5px;color:#666;font-weight:400;">2024</div>
<div class="a" style="left:522.4px;top:856.3px;width:16px;height:13px;background:rgba(250,190,80,0.9);border:1px solid rgb(250,190,80)"></div>
<div class="t" style="left:543.8px;top:855.22px;font-size:12.5px;line-height:12.5px;color:#666;font-weight:400;">2025</div>
<svg class="a" style="left:0;top:0;width:1916px;height:881px;pointer-events:none" viewBox="0 0 1916 881"><line x1="384" y1="879.5" x2="617" y2="879.5" stroke="rgba(0,0,0,0.1)" stroke-width="1"/><line x1="391.5" y1="879.5" x2="391.5" y2="1018.5" stroke="rgba(0,0,0,0.22)" stroke-width="1"/><line x1="410.5" y1="879.5" x2="410.5" y2="1018.5" stroke="rgba(0,0,0,0.1)" stroke-width="1"/><line x1="429.5" y1="879.5" x2="429.5" y2="1018.5" stroke="rgba(0,0,0,0.1)" stroke-width="1"/><line x1="448.5" y1="879.5" x2="448.5" y2="1018.5" stroke="rgba(0,0,0,0.1)" stroke-width="1"/><line x1="466.5" y1="879.5" x2="466.5" y2="1018.5" stroke="rgba(0,0,0,0.1)" stroke-width="1"/><line x1="485.5" y1="879.5" x2="485.5" y2="1018.5" stroke="rgba(0,0,0,0.1)" stroke-width="1"/><line x1="504.5" y1="879.5" x2="504.5" y2="1018.5" stroke="rgba(0,0,0,0.1)" stroke-width="1"/><line x1="523.5" y1="879.5" x2="523.5" y2="1018.5" stroke="rgba(0,0,0,0.1)" stroke-width="1"/><line x1="541.5" y1="879.5" x2="541.5" y2="1018.5" stroke="rgba(0,0,0,0.1)" stroke-width="1"/><line x1="560.5" y1="879.5" x2="560.5" y2="1018.5" stroke="rgba(0,0,0,0.1)" stroke-width="1"/><line x1="579.5" y1="879.5" x2="579.5" y2="1018.5" stroke="rgba(0,0,0,0.1)" stroke-width="1"/><line x1="598.5" y1="879.5" x2="598.5" y2="1018.5" stroke="rgba(0,0,0,0.1)" stroke-width="1"/><rect x="423.12" y="880.10" width="3.51" height="129.90" fill="rgba(250,190,80,0.8)" stroke="rgb(250,190,80)" stroke-width="1"/><rect x="441.89" y="880.10" width="3.51" height="129.90" fill="rgba(250,190,80,0.8)" stroke="rgb(250,190,80)" stroke-width="1"/><rect x="516.99" y="880.10" width="3.51" height="129.90" fill="rgba(250,190,80,0.8)" stroke="rgb(250,190,80)" stroke-width="1"/></svg>
<div class="t" style="left:381.4px;top:873.32px;font-size:12.5px;line-height:12.5px;color:#666;font-weight:400;transform:translateX(-100%);">1.0</div>
<div class="t" style="left:401.0875px;top:1022.62px;font-size:12.5px;line-height:12.5px;color:#666;font-weight:400;transform:translateX(-50%);">J</div>
<div class="t" style="left:419.8625px;top:1022.62px;font-size:12.5px;line-height:12.5px;color:#666;font-weight:400;transform:translateX(-50%);">F</div>
<div class="t" style="left:438.6375px;top:1022.62px;font-size:12.5px;line-height:12.5px;color:#666;font-weight:400;transform:translateX(-50%);">M</div>
<div class="t" style="left:457.4125px;top:1022.62px;font-size:12.5px;line-height:12.5px;color:#666;font-weight:400;transform:translateX(-50%);">A</div>
<div class="t" style="left:476.1875px;top:1022.62px;font-size:12.5px;line-height:12.5px;color:#666;font-weight:400;transform:translateX(-50%);">M</div>
<div class="t" style="left:494.9625px;top:1022.62px;font-size:12.5px;line-height:12.5px;color:#666;font-weight:400;transform:translateX(-50%);">J</div>
<div class="t" style="left:513.7375px;top:1022.62px;font-size:12.5px;line-height:12.5px;color:#666;font-weight:400;transform:translateX(-50%);">J</div>
<div class="t" style="left:532.5125px;top:1022.62px;font-size:12.5px;line-height:12.5px;color:#666;font-weight:400;transform:translateX(-50%);">A</div>
<div class="t" style="left:551.2875px;top:1022.62px;font-size:12.5px;line-height:12.5px;color:#666;font-weight:400;transform:translateX(-50%);">S</div>
<div class="t" style="left:570.0625px;top:1022.62px;font-size:12.5px;line-height:12.5px;color:#666;font-weight:400;transform:translateX(-50%);">O</div>
<div class="t" style="left:588.8375px;top:1022.62px;font-size:12.5px;line-height:12.5px;color:#666;font-weight:400;transform:translateX(-50%);">N</div>
<div class="t" style="left:607.6125px;top:1022.62px;font-size:12.5px;line-height:12.5px;color:#666;font-weight:400;transform:translateX(-50%);">D</div>
<div class="t" style="left:877px;top:824.30px;font-size:15px;line-height:15px;color:#1a1a1a;font-weight:400;transform:translateX(-50%);letter-spacing:-0.1px;">Amount of orders by month (excl. tax)</div>
<div class="a" style="left:795.0px;top:856.3px;width:16px;height:13px;background:rgba(137,86,161,0.9);border:1px solid rgb(137,86,161)"></div>
<div class="t" style="left:816.4px;top:855.22px;font-size:12.5px;line-height:12.5px;color:#666;font-weight:400;">2023</div>
<div class="a" style="left:852.7px;top:856.3px;width:16px;height:13px;background:rgba(60,147,183,0.9);border:1px solid rgb(60,147,183)"></div>
<div class="t" style="left:874.1px;top:855.22px;font-size:12.5px;line-height:12.5px;color:#666;font-weight:400;">2024</div>
<div class="a" style="left:910.4px;top:856.3px;width:16px;height:13px;background:rgba(250,190,80,0.9);border:1px solid rgb(250,190,80)"></div>
<div class="t" style="left:931.8px;top:855.22px;font-size:12.5px;line-height:12.5px;color:#666;font-weight:400;">2025</div>
<svg class="a" style="left:0;top:0;width:1916px;height:881px;pointer-events:none" viewBox="0 0 1916 881"><line x1="775" y1="879.5" x2="1005" y2="879.5" stroke="rgba(0,0,0,0.1)" stroke-width="1"/><line x1="783.5" y1="879.5" x2="783.5" y2="1018.5" stroke="rgba(0,0,0,0.22)" stroke-width="1"/><line x1="801.5" y1="879.5" x2="801.5" y2="1018.5" stroke="rgba(0,0,0,0.1)" stroke-width="1"/><line x1="820.5" y1="879.5" x2="820.5" y2="1018.5" stroke="rgba(0,0,0,0.1)" stroke-width="1"/><line x1="838.5" y1="879.5" x2="838.5" y2="1018.5" stroke="rgba(0,0,0,0.1)" stroke-width="1"/><line x1="857.5" y1="879.5" x2="857.5" y2="1018.5" stroke="rgba(0,0,0,0.1)" stroke-width="1"/><line x1="875.5" y1="879.5" x2="875.5" y2="1018.5" stroke="rgba(0,0,0,0.1)" stroke-width="1"/><line x1="894.5" y1="879.5" x2="894.5" y2="1018.5" stroke="rgba(0,0,0,0.1)" stroke-width="1"/><line x1="912.5" y1="879.5" x2="912.5" y2="1018.5" stroke="rgba(0,0,0,0.1)" stroke-width="1"/><line x1="931.5" y1="879.5" x2="931.5" y2="1018.5" stroke="rgba(0,0,0,0.1)" stroke-width="1"/><line x1="949.5" y1="879.5" x2="949.5" y2="1018.5" stroke="rgba(0,0,0,0.1)" stroke-width="1"/><line x1="968.5" y1="879.5" x2="968.5" y2="1018.5" stroke="rgba(0,0,0,0.1)" stroke-width="1"/><line x1="986.5" y1="879.5" x2="986.5" y2="1018.5" stroke="rgba(0,0,0,0.1)" stroke-width="1"/><rect x="814.14" y="880.10" width="3.44" height="129.90" fill="rgba(250,190,80,0.8)" stroke="rgb(250,190,80)" stroke-width="1"/><rect x="906.55" y="880.10" width="3.44" height="129.90" fill="rgba(250,190,80,0.8)" stroke="rgb(250,190,80)" stroke-width="1"/></svg>
<div class="t" style="left:772.9000000000001px;top:873.32px;font-size:12.5px;line-height:12.5px;color:#666;font-weight:400;transform:translateX(-100%);">200</div>
<div class="t" style="left:792.4416666666667px;top:1022.62px;font-size:12.5px;line-height:12.5px;color:#666;font-weight:400;transform:translateX(-50%);">J</div>
<div class="t" style="left:810.9250000000001px;top:1022.62px;font-size:12.5px;line-height:12.5px;color:#666;font-weight:400;transform:translateX(-50%);">F</div>
<div class="t" style="left:829.4083333333334px;top:1022.62px;font-size:12.5px;line-height:12.5px;color:#666;font-weight:400;transform:translateX(-50%);">M</div>
<div class="t" style="left:847.8916666666667px;top:1022.62px;font-size:12.5px;line-height:12.5px;color:#666;font-weight:400;transform:translateX(-50%);">A</div>
<div class="t" style="left:866.375px;top:1022.62px;font-size:12.5px;line-height:12.5px;color:#666;font-weight:400;transform:translateX(-50%);">M</div>
<div class="t" style="left:884.8583333333333px;top:1022.62px;font-size:12.5px;line-height:12.5px;color:#666;font-weight:400;transform:translateX(-50%);">J</div>
<div class="t" style="left:903.3416666666667px;top:1022.62px;font-size:12.5px;line-height:12.5px;color:#666;font-weight:400;transform:translateX(-50%);">J</div>
<div class="t" style="left:921.825px;top:1022.62px;font-size:12.5px;line-height:12.5px;color:#666;font-weight:400;transform:translateX(-50%);">A</div>
<div class="t" style="left:940.3083333333334px;top:1022.62px;font-size:12.5px;line-height:12.5px;color:#666;font-weight:400;transform:translateX(-50%);">S</div>
<div class="t" style="left:958.7916666666667px;top:1022.62px;font-size:12.5px;line-height:12.5px;color:#666;font-weight:400;transform:translateX(-50%);">O</div>
<div class="t" style="left:977.275px;top:1022.62px;font-size:12.5px;line-height:12.5px;color:#666;font-weight:400;transform:translateX(-50%);">N</div>
<div class="t" style="left:995.7583333333333px;top:1022.62px;font-size:12.5px;line-height:12.5px;color:#666;font-weight:400;transform:translateX(-50%);">D</div>
</body></html>
